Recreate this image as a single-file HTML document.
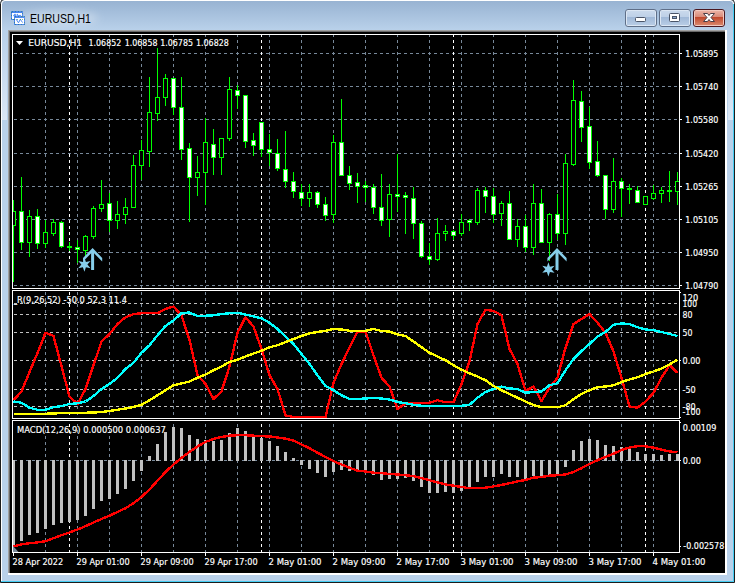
<!DOCTYPE html>
<html><head><meta charset="utf-8"><title>EURUSD,H1</title><style>html,body{margin:0;padding:0;background:#fff;overflow:hidden}svg{display:block}</style></head><body>
<svg width="737" height="583" viewBox="0 0 737 583" font-family='"Liberation Sans", "DejaVu Sans", sans-serif' shape-rendering="crispEdges">
<defs>
<linearGradient id="gt" x1="0" y1="0" x2="0" y2="1"><stop offset="0" stop-color="#98b3d2"/><stop offset="1" stop-color="#b9d1ea"/></linearGradient>
<linearGradient id="bt" x1="0" y1="0" x2="0" y2="1"><stop offset="0" stop-color="#c9d9ec"/><stop offset="1" stop-color="#bdd0e7"/></linearGradient>
<linearGradient id="bb" x1="0" y1="0" x2="0" y2="1"><stop offset="0" stop-color="#9fb8d7"/><stop offset="1" stop-color="#b7cce5"/></linearGradient>
<linearGradient id="ct" x1="0" y1="0" x2="0" y2="1"><stop offset="0" stop-color="#eab0a2"/><stop offset="1" stop-color="#d98a78"/></linearGradient>
<linearGradient id="cb" x1="0" y1="0" x2="0" y2="1"><stop offset="0" stop-color="#c0452a"/><stop offset="1" stop-color="#d88468"/></linearGradient>
<linearGradient id="refl" x1="0" y1="0" x2="0" y2="1"><stop offset="0" stop-color="#dbe7f5" stop-opacity="0"/><stop offset="1" stop-color="#dbe7f5" stop-opacity="1"/></linearGradient>
<filter id="glow" x="-20%" y="-60%" width="140%" height="220%"><feGaussianBlur stdDeviation="4"/></filter>
<clipPath id="cm"><rect x="13" y="35" width="666" height="253"/></clipPath>
<clipPath id="ci"><rect x="13" y="291" width="666" height="127"/></clipPath>
<clipPath id="cd"><rect x="13" y="421" width="666" height="131"/></clipPath>
</defs>
<rect x="0" y="0" width="737" height="583" fill="#ffffff"/>
<path d="M0.5 582.5 V3.5 Q0.5 -0.5 4.5 -0.5 H730.5 Q734.5 -0.5 734.5 3.5 V582.5 Z" fill="#b9d1ea" stroke="#1c1c1c" stroke-width="1" shape-rendering="auto"/>
<rect x="2" y="1" width="731" height="29" fill="url(#gt)"/>
<rect x="2" y="30" width="6" height="551" fill="#b9d1ea"/>
<rect x="727" y="30" width="6" height="551" fill="#b9d1ea"/>
<rect x="2" y="575" width="731" height="6" fill="#b9d1ea"/>
<rect x="2" y="34" width="5" height="86" fill="url(#refl)"/>
<rect x="728" y="34" width="5" height="86" fill="url(#refl)"/>
<path d="M1.5 581 V4 Q1.5 0.5 5 0.5 H730 Q733.5 0.5 733.5 4" fill="none" stroke="#ffffff" stroke-width="1" shape-rendering="auto"/>
<path d="M733.5 4 V581.5 H1" fill="none" stroke="#45cdf3" stroke-width="1" shape-rendering="auto"/>
<rect x="8" y="30" width="719" height="545" fill="#ffffff"/>
<rect x="8" y="30" width="717" height="543" fill="#a0a0a0"/>
<rect x="9" y="31" width="716" height="542" fill="#696969"/>
<rect x="10" y="32" width="715" height="541" fill="#000000"/>
<g shape-rendering="crispEdges">
<rect x="11" y="11" width="12" height="9" fill="#4785f2"/>
<rect x="12" y="13" width="10" height="6" fill="#ffffff"/>
<path d="M13.5 16 l1.5 -1.5 l1.5 2 M17 14 l1.5 2.5 l1.5 -1 l2 2" fill="none" stroke="#4785f2" stroke-width="1.2" shape-rendering="auto"/>
<rect x="14" y="16" width="11" height="9" fill="#4785f2"/>
<rect x="15" y="18" width="9" height="6" fill="#ffffff"/>
<path d="M16 19 L18.5 22.8 L20.3 19.3 L22.6 22.6" fill="none" stroke="#4785f2" stroke-width="1" shape-rendering="auto"/>
<path d="M11.5 11.5 h11 v8 h-8 M14.5 16.5 h10 v8 h-10 z M11.5 11.5 v8 h3" fill="none" stroke="#2f7a5c" stroke-dasharray="1 2" stroke-width="1" opacity="0.6"/>
</g>
<ellipse cx="60" cy="18" rx="38" ry="7" fill="#ffffff" opacity="0.35" filter="url(#glow)" shape-rendering="auto"/>
<text x="30" y="23" font-size="12" fill="#000000" textLength="61" lengthAdjust="spacingAndGlyphs" shape-rendering="auto">EURUSD,H1</text>
<rect x="625.5" y="9.5" width="31" height="17" rx="2.5" ry="2.5" fill="#dce7f4" stroke="#5f6f88" shape-rendering="auto"/>
<rect x="627" y="11" width="28" height="6" fill="url(#bt)"/>
<rect x="627" y="17" width="28" height="8" fill="url(#bb)"/>
<rect x="659.5" y="9.5" width="31" height="17" rx="2.5" ry="2.5" fill="#dce7f4" stroke="#5f6f88" shape-rendering="auto"/>
<rect x="661" y="11" width="28" height="6" fill="url(#bt)"/>
<rect x="661" y="17" width="28" height="8" fill="url(#bb)"/>
<rect x="693.5" y="9.5" width="31" height="17" rx="2.5" ry="2.5" fill="#f3c9bf" stroke="#4a1820" shape-rendering="auto"/>
<rect x="695" y="11" width="28" height="6" fill="url(#ct)"/>
<rect x="695" y="17" width="28" height="8" fill="url(#cb)"/>
<rect x="635.5" y="17.5" width="10" height="4" rx="1" fill="#ffffff" stroke="#4a5568" shape-rendering="auto"/>
<rect x="669.5" y="13.5" width="10" height="8" rx="1" fill="#ffffff" stroke="#4a5568" shape-rendering="auto"/>
<rect x="672.5" y="16.5" width="4" height="2" fill="#8aa6cc" stroke="#4a5568" shape-rendering="auto"/>
<path d="M703.5 13.5 h4 l1.5 2 l1.5 -2 h4 l-3.5 4 l3.5 4 h-4 l-1.5 -2 l-1.5 2 h-4 l3.5 -4 z" fill="#ffffff" stroke="#4b3f48" stroke-width="1" stroke-linejoin="round" shape-rendering="auto"/>
<path d="M45 35h1v2h-1zM45 40h1v3h-1zM45 46h1v3h-1zM45 52h1v3h-1zM45 58h1v3h-1zM45 64h1v3h-1zM45 70h1v3h-1zM45 76h1v3h-1zM45 82h1v3h-1zM45 88h1v3h-1zM45 94h1v3h-1zM45 100h1v3h-1zM45 106h1v3h-1zM45 112h1v3h-1zM45 118h1v3h-1zM45 124h1v3h-1zM45 130h1v3h-1zM45 136h1v3h-1zM45 142h1v3h-1zM45 148h1v3h-1zM45 154h1v3h-1zM45 160h1v3h-1zM45 166h1v3h-1zM45 172h1v3h-1zM45 178h1v3h-1zM45 184h1v3h-1zM45 190h1v3h-1zM45 196h1v3h-1zM45 202h1v3h-1zM45 208h1v3h-1zM45 214h1v3h-1zM45 220h1v3h-1zM45 226h1v3h-1zM45 232h1v3h-1zM45 238h1v3h-1zM45 244h1v3h-1zM45 250h1v3h-1zM45 256h1v3h-1zM45 262h1v3h-1zM45 268h1v3h-1zM45 274h1v3h-1zM45 280h1v3h-1zM45 286h1v2h-1z" fill="#778899"/>
<path d="M77 35h1v2h-1zM77 40h1v3h-1zM77 46h1v3h-1zM77 52h1v3h-1zM77 58h1v3h-1zM77 64h1v3h-1zM77 70h1v3h-1zM77 76h1v3h-1zM77 82h1v3h-1zM77 88h1v3h-1zM77 94h1v3h-1zM77 100h1v3h-1zM77 106h1v3h-1zM77 112h1v3h-1zM77 118h1v3h-1zM77 124h1v3h-1zM77 130h1v3h-1zM77 136h1v3h-1zM77 142h1v3h-1zM77 148h1v3h-1zM77 154h1v3h-1zM77 160h1v3h-1zM77 166h1v3h-1zM77 172h1v3h-1zM77 178h1v3h-1zM77 184h1v3h-1zM77 190h1v3h-1zM77 196h1v3h-1zM77 202h1v3h-1zM77 208h1v3h-1zM77 214h1v3h-1zM77 220h1v3h-1zM77 226h1v3h-1zM77 232h1v3h-1zM77 238h1v3h-1zM77 244h1v3h-1zM77 250h1v3h-1zM77 256h1v3h-1zM77 262h1v3h-1zM77 268h1v3h-1zM77 274h1v3h-1zM77 280h1v3h-1zM77 286h1v2h-1z" fill="#778899"/>
<path d="M109 35h1v2h-1zM109 40h1v3h-1zM109 46h1v3h-1zM109 52h1v3h-1zM109 58h1v3h-1zM109 64h1v3h-1zM109 70h1v3h-1zM109 76h1v3h-1zM109 82h1v3h-1zM109 88h1v3h-1zM109 94h1v3h-1zM109 100h1v3h-1zM109 106h1v3h-1zM109 112h1v3h-1zM109 118h1v3h-1zM109 124h1v3h-1zM109 130h1v3h-1zM109 136h1v3h-1zM109 142h1v3h-1zM109 148h1v3h-1zM109 154h1v3h-1zM109 160h1v3h-1zM109 166h1v3h-1zM109 172h1v3h-1zM109 178h1v3h-1zM109 184h1v3h-1zM109 190h1v3h-1zM109 196h1v3h-1zM109 202h1v3h-1zM109 208h1v3h-1zM109 214h1v3h-1zM109 220h1v3h-1zM109 226h1v3h-1zM109 232h1v3h-1zM109 238h1v3h-1zM109 244h1v3h-1zM109 250h1v3h-1zM109 256h1v3h-1zM109 262h1v3h-1zM109 268h1v3h-1zM109 274h1v3h-1zM109 280h1v3h-1zM109 286h1v2h-1z" fill="#778899"/>
<path d="M141 35h1v2h-1zM141 40h1v3h-1zM141 46h1v3h-1zM141 52h1v3h-1zM141 58h1v3h-1zM141 64h1v3h-1zM141 70h1v3h-1zM141 76h1v3h-1zM141 82h1v3h-1zM141 88h1v3h-1zM141 94h1v3h-1zM141 100h1v3h-1zM141 106h1v3h-1zM141 112h1v3h-1zM141 118h1v3h-1zM141 124h1v3h-1zM141 130h1v3h-1zM141 136h1v3h-1zM141 142h1v3h-1zM141 148h1v3h-1zM141 154h1v3h-1zM141 160h1v3h-1zM141 166h1v3h-1zM141 172h1v3h-1zM141 178h1v3h-1zM141 184h1v3h-1zM141 190h1v3h-1zM141 196h1v3h-1zM141 202h1v3h-1zM141 208h1v3h-1zM141 214h1v3h-1zM141 220h1v3h-1zM141 226h1v3h-1zM141 232h1v3h-1zM141 238h1v3h-1zM141 244h1v3h-1zM141 250h1v3h-1zM141 256h1v3h-1zM141 262h1v3h-1zM141 268h1v3h-1zM141 274h1v3h-1zM141 280h1v3h-1zM141 286h1v2h-1z" fill="#778899"/>
<path d="M173 35h1v2h-1zM173 40h1v3h-1zM173 46h1v3h-1zM173 52h1v3h-1zM173 58h1v3h-1zM173 64h1v3h-1zM173 70h1v3h-1zM173 76h1v3h-1zM173 82h1v3h-1zM173 88h1v3h-1zM173 94h1v3h-1zM173 100h1v3h-1zM173 106h1v3h-1zM173 112h1v3h-1zM173 118h1v3h-1zM173 124h1v3h-1zM173 130h1v3h-1zM173 136h1v3h-1zM173 142h1v3h-1zM173 148h1v3h-1zM173 154h1v3h-1zM173 160h1v3h-1zM173 166h1v3h-1zM173 172h1v3h-1zM173 178h1v3h-1zM173 184h1v3h-1zM173 190h1v3h-1zM173 196h1v3h-1zM173 202h1v3h-1zM173 208h1v3h-1zM173 214h1v3h-1zM173 220h1v3h-1zM173 226h1v3h-1zM173 232h1v3h-1zM173 238h1v3h-1zM173 244h1v3h-1zM173 250h1v3h-1zM173 256h1v3h-1zM173 262h1v3h-1zM173 268h1v3h-1zM173 274h1v3h-1zM173 280h1v3h-1zM173 286h1v2h-1z" fill="#778899"/>
<path d="M205 35h1v2h-1zM205 40h1v3h-1zM205 46h1v3h-1zM205 52h1v3h-1zM205 58h1v3h-1zM205 64h1v3h-1zM205 70h1v3h-1zM205 76h1v3h-1zM205 82h1v3h-1zM205 88h1v3h-1zM205 94h1v3h-1zM205 100h1v3h-1zM205 106h1v3h-1zM205 112h1v3h-1zM205 118h1v3h-1zM205 124h1v3h-1zM205 130h1v3h-1zM205 136h1v3h-1zM205 142h1v3h-1zM205 148h1v3h-1zM205 154h1v3h-1zM205 160h1v3h-1zM205 166h1v3h-1zM205 172h1v3h-1zM205 178h1v3h-1zM205 184h1v3h-1zM205 190h1v3h-1zM205 196h1v3h-1zM205 202h1v3h-1zM205 208h1v3h-1zM205 214h1v3h-1zM205 220h1v3h-1zM205 226h1v3h-1zM205 232h1v3h-1zM205 238h1v3h-1zM205 244h1v3h-1zM205 250h1v3h-1zM205 256h1v3h-1zM205 262h1v3h-1zM205 268h1v3h-1zM205 274h1v3h-1zM205 280h1v3h-1zM205 286h1v2h-1z" fill="#778899"/>
<path d="M237 35h1v2h-1zM237 40h1v3h-1zM237 46h1v3h-1zM237 52h1v3h-1zM237 58h1v3h-1zM237 64h1v3h-1zM237 70h1v3h-1zM237 76h1v3h-1zM237 82h1v3h-1zM237 88h1v3h-1zM237 94h1v3h-1zM237 100h1v3h-1zM237 106h1v3h-1zM237 112h1v3h-1zM237 118h1v3h-1zM237 124h1v3h-1zM237 130h1v3h-1zM237 136h1v3h-1zM237 142h1v3h-1zM237 148h1v3h-1zM237 154h1v3h-1zM237 160h1v3h-1zM237 166h1v3h-1zM237 172h1v3h-1zM237 178h1v3h-1zM237 184h1v3h-1zM237 190h1v3h-1zM237 196h1v3h-1zM237 202h1v3h-1zM237 208h1v3h-1zM237 214h1v3h-1zM237 220h1v3h-1zM237 226h1v3h-1zM237 232h1v3h-1zM237 238h1v3h-1zM237 244h1v3h-1zM237 250h1v3h-1zM237 256h1v3h-1zM237 262h1v3h-1zM237 268h1v3h-1zM237 274h1v3h-1zM237 280h1v3h-1zM237 286h1v2h-1z" fill="#778899"/>
<path d="M269 35h1v2h-1zM269 40h1v3h-1zM269 46h1v3h-1zM269 52h1v3h-1zM269 58h1v3h-1zM269 64h1v3h-1zM269 70h1v3h-1zM269 76h1v3h-1zM269 82h1v3h-1zM269 88h1v3h-1zM269 94h1v3h-1zM269 100h1v3h-1zM269 106h1v3h-1zM269 112h1v3h-1zM269 118h1v3h-1zM269 124h1v3h-1zM269 130h1v3h-1zM269 136h1v3h-1zM269 142h1v3h-1zM269 148h1v3h-1zM269 154h1v3h-1zM269 160h1v3h-1zM269 166h1v3h-1zM269 172h1v3h-1zM269 178h1v3h-1zM269 184h1v3h-1zM269 190h1v3h-1zM269 196h1v3h-1zM269 202h1v3h-1zM269 208h1v3h-1zM269 214h1v3h-1zM269 220h1v3h-1zM269 226h1v3h-1zM269 232h1v3h-1zM269 238h1v3h-1zM269 244h1v3h-1zM269 250h1v3h-1zM269 256h1v3h-1zM269 262h1v3h-1zM269 268h1v3h-1zM269 274h1v3h-1zM269 280h1v3h-1zM269 286h1v2h-1z" fill="#778899"/>
<path d="M301 35h1v2h-1zM301 40h1v3h-1zM301 46h1v3h-1zM301 52h1v3h-1zM301 58h1v3h-1zM301 64h1v3h-1zM301 70h1v3h-1zM301 76h1v3h-1zM301 82h1v3h-1zM301 88h1v3h-1zM301 94h1v3h-1zM301 100h1v3h-1zM301 106h1v3h-1zM301 112h1v3h-1zM301 118h1v3h-1zM301 124h1v3h-1zM301 130h1v3h-1zM301 136h1v3h-1zM301 142h1v3h-1zM301 148h1v3h-1zM301 154h1v3h-1zM301 160h1v3h-1zM301 166h1v3h-1zM301 172h1v3h-1zM301 178h1v3h-1zM301 184h1v3h-1zM301 190h1v3h-1zM301 196h1v3h-1zM301 202h1v3h-1zM301 208h1v3h-1zM301 214h1v3h-1zM301 220h1v3h-1zM301 226h1v3h-1zM301 232h1v3h-1zM301 238h1v3h-1zM301 244h1v3h-1zM301 250h1v3h-1zM301 256h1v3h-1zM301 262h1v3h-1zM301 268h1v3h-1zM301 274h1v3h-1zM301 280h1v3h-1zM301 286h1v2h-1z" fill="#778899"/>
<path d="M333 35h1v2h-1zM333 40h1v3h-1zM333 46h1v3h-1zM333 52h1v3h-1zM333 58h1v3h-1zM333 64h1v3h-1zM333 70h1v3h-1zM333 76h1v3h-1zM333 82h1v3h-1zM333 88h1v3h-1zM333 94h1v3h-1zM333 100h1v3h-1zM333 106h1v3h-1zM333 112h1v3h-1zM333 118h1v3h-1zM333 124h1v3h-1zM333 130h1v3h-1zM333 136h1v3h-1zM333 142h1v3h-1zM333 148h1v3h-1zM333 154h1v3h-1zM333 160h1v3h-1zM333 166h1v3h-1zM333 172h1v3h-1zM333 178h1v3h-1zM333 184h1v3h-1zM333 190h1v3h-1zM333 196h1v3h-1zM333 202h1v3h-1zM333 208h1v3h-1zM333 214h1v3h-1zM333 220h1v3h-1zM333 226h1v3h-1zM333 232h1v3h-1zM333 238h1v3h-1zM333 244h1v3h-1zM333 250h1v3h-1zM333 256h1v3h-1zM333 262h1v3h-1zM333 268h1v3h-1zM333 274h1v3h-1zM333 280h1v3h-1zM333 286h1v2h-1z" fill="#778899"/>
<path d="M365 35h1v2h-1zM365 40h1v3h-1zM365 46h1v3h-1zM365 52h1v3h-1zM365 58h1v3h-1zM365 64h1v3h-1zM365 70h1v3h-1zM365 76h1v3h-1zM365 82h1v3h-1zM365 88h1v3h-1zM365 94h1v3h-1zM365 100h1v3h-1zM365 106h1v3h-1zM365 112h1v3h-1zM365 118h1v3h-1zM365 124h1v3h-1zM365 130h1v3h-1zM365 136h1v3h-1zM365 142h1v3h-1zM365 148h1v3h-1zM365 154h1v3h-1zM365 160h1v3h-1zM365 166h1v3h-1zM365 172h1v3h-1zM365 178h1v3h-1zM365 184h1v3h-1zM365 190h1v3h-1zM365 196h1v3h-1zM365 202h1v3h-1zM365 208h1v3h-1zM365 214h1v3h-1zM365 220h1v3h-1zM365 226h1v3h-1zM365 232h1v3h-1zM365 238h1v3h-1zM365 244h1v3h-1zM365 250h1v3h-1zM365 256h1v3h-1zM365 262h1v3h-1zM365 268h1v3h-1zM365 274h1v3h-1zM365 280h1v3h-1zM365 286h1v2h-1z" fill="#778899"/>
<path d="M397 35h1v2h-1zM397 40h1v3h-1zM397 46h1v3h-1zM397 52h1v3h-1zM397 58h1v3h-1zM397 64h1v3h-1zM397 70h1v3h-1zM397 76h1v3h-1zM397 82h1v3h-1zM397 88h1v3h-1zM397 94h1v3h-1zM397 100h1v3h-1zM397 106h1v3h-1zM397 112h1v3h-1zM397 118h1v3h-1zM397 124h1v3h-1zM397 130h1v3h-1zM397 136h1v3h-1zM397 142h1v3h-1zM397 148h1v3h-1zM397 154h1v3h-1zM397 160h1v3h-1zM397 166h1v3h-1zM397 172h1v3h-1zM397 178h1v3h-1zM397 184h1v3h-1zM397 190h1v3h-1zM397 196h1v3h-1zM397 202h1v3h-1zM397 208h1v3h-1zM397 214h1v3h-1zM397 220h1v3h-1zM397 226h1v3h-1zM397 232h1v3h-1zM397 238h1v3h-1zM397 244h1v3h-1zM397 250h1v3h-1zM397 256h1v3h-1zM397 262h1v3h-1zM397 268h1v3h-1zM397 274h1v3h-1zM397 280h1v3h-1zM397 286h1v2h-1z" fill="#778899"/>
<path d="M429 35h1v2h-1zM429 40h1v3h-1zM429 46h1v3h-1zM429 52h1v3h-1zM429 58h1v3h-1zM429 64h1v3h-1zM429 70h1v3h-1zM429 76h1v3h-1zM429 82h1v3h-1zM429 88h1v3h-1zM429 94h1v3h-1zM429 100h1v3h-1zM429 106h1v3h-1zM429 112h1v3h-1zM429 118h1v3h-1zM429 124h1v3h-1zM429 130h1v3h-1zM429 136h1v3h-1zM429 142h1v3h-1zM429 148h1v3h-1zM429 154h1v3h-1zM429 160h1v3h-1zM429 166h1v3h-1zM429 172h1v3h-1zM429 178h1v3h-1zM429 184h1v3h-1zM429 190h1v3h-1zM429 196h1v3h-1zM429 202h1v3h-1zM429 208h1v3h-1zM429 214h1v3h-1zM429 220h1v3h-1zM429 226h1v3h-1zM429 232h1v3h-1zM429 238h1v3h-1zM429 244h1v3h-1zM429 250h1v3h-1zM429 256h1v3h-1zM429 262h1v3h-1zM429 268h1v3h-1zM429 274h1v3h-1zM429 280h1v3h-1zM429 286h1v2h-1z" fill="#778899"/>
<path d="M461 35h1v2h-1zM461 40h1v3h-1zM461 46h1v3h-1zM461 52h1v3h-1zM461 58h1v3h-1zM461 64h1v3h-1zM461 70h1v3h-1zM461 76h1v3h-1zM461 82h1v3h-1zM461 88h1v3h-1zM461 94h1v3h-1zM461 100h1v3h-1zM461 106h1v3h-1zM461 112h1v3h-1zM461 118h1v3h-1zM461 124h1v3h-1zM461 130h1v3h-1zM461 136h1v3h-1zM461 142h1v3h-1zM461 148h1v3h-1zM461 154h1v3h-1zM461 160h1v3h-1zM461 166h1v3h-1zM461 172h1v3h-1zM461 178h1v3h-1zM461 184h1v3h-1zM461 190h1v3h-1zM461 196h1v3h-1zM461 202h1v3h-1zM461 208h1v3h-1zM461 214h1v3h-1zM461 220h1v3h-1zM461 226h1v3h-1zM461 232h1v3h-1zM461 238h1v3h-1zM461 244h1v3h-1zM461 250h1v3h-1zM461 256h1v3h-1zM461 262h1v3h-1zM461 268h1v3h-1zM461 274h1v3h-1zM461 280h1v3h-1zM461 286h1v2h-1z" fill="#778899"/>
<path d="M493 35h1v2h-1zM493 40h1v3h-1zM493 46h1v3h-1zM493 52h1v3h-1zM493 58h1v3h-1zM493 64h1v3h-1zM493 70h1v3h-1zM493 76h1v3h-1zM493 82h1v3h-1zM493 88h1v3h-1zM493 94h1v3h-1zM493 100h1v3h-1zM493 106h1v3h-1zM493 112h1v3h-1zM493 118h1v3h-1zM493 124h1v3h-1zM493 130h1v3h-1zM493 136h1v3h-1zM493 142h1v3h-1zM493 148h1v3h-1zM493 154h1v3h-1zM493 160h1v3h-1zM493 166h1v3h-1zM493 172h1v3h-1zM493 178h1v3h-1zM493 184h1v3h-1zM493 190h1v3h-1zM493 196h1v3h-1zM493 202h1v3h-1zM493 208h1v3h-1zM493 214h1v3h-1zM493 220h1v3h-1zM493 226h1v3h-1zM493 232h1v3h-1zM493 238h1v3h-1zM493 244h1v3h-1zM493 250h1v3h-1zM493 256h1v3h-1zM493 262h1v3h-1zM493 268h1v3h-1zM493 274h1v3h-1zM493 280h1v3h-1zM493 286h1v2h-1z" fill="#778899"/>
<path d="M525 35h1v2h-1zM525 40h1v3h-1zM525 46h1v3h-1zM525 52h1v3h-1zM525 58h1v3h-1zM525 64h1v3h-1zM525 70h1v3h-1zM525 76h1v3h-1zM525 82h1v3h-1zM525 88h1v3h-1zM525 94h1v3h-1zM525 100h1v3h-1zM525 106h1v3h-1zM525 112h1v3h-1zM525 118h1v3h-1zM525 124h1v3h-1zM525 130h1v3h-1zM525 136h1v3h-1zM525 142h1v3h-1zM525 148h1v3h-1zM525 154h1v3h-1zM525 160h1v3h-1zM525 166h1v3h-1zM525 172h1v3h-1zM525 178h1v3h-1zM525 184h1v3h-1zM525 190h1v3h-1zM525 196h1v3h-1zM525 202h1v3h-1zM525 208h1v3h-1zM525 214h1v3h-1zM525 220h1v3h-1zM525 226h1v3h-1zM525 232h1v3h-1zM525 238h1v3h-1zM525 244h1v3h-1zM525 250h1v3h-1zM525 256h1v3h-1zM525 262h1v3h-1zM525 268h1v3h-1zM525 274h1v3h-1zM525 280h1v3h-1zM525 286h1v2h-1z" fill="#778899"/>
<path d="M557 35h1v2h-1zM557 40h1v3h-1zM557 46h1v3h-1zM557 52h1v3h-1zM557 58h1v3h-1zM557 64h1v3h-1zM557 70h1v3h-1zM557 76h1v3h-1zM557 82h1v3h-1zM557 88h1v3h-1zM557 94h1v3h-1zM557 100h1v3h-1zM557 106h1v3h-1zM557 112h1v3h-1zM557 118h1v3h-1zM557 124h1v3h-1zM557 130h1v3h-1zM557 136h1v3h-1zM557 142h1v3h-1zM557 148h1v3h-1zM557 154h1v3h-1zM557 160h1v3h-1zM557 166h1v3h-1zM557 172h1v3h-1zM557 178h1v3h-1zM557 184h1v3h-1zM557 190h1v3h-1zM557 196h1v3h-1zM557 202h1v3h-1zM557 208h1v3h-1zM557 214h1v3h-1zM557 220h1v3h-1zM557 226h1v3h-1zM557 232h1v3h-1zM557 238h1v3h-1zM557 244h1v3h-1zM557 250h1v3h-1zM557 256h1v3h-1zM557 262h1v3h-1zM557 268h1v3h-1zM557 274h1v3h-1zM557 280h1v3h-1zM557 286h1v2h-1z" fill="#778899"/>
<path d="M589 35h1v2h-1zM589 40h1v3h-1zM589 46h1v3h-1zM589 52h1v3h-1zM589 58h1v3h-1zM589 64h1v3h-1zM589 70h1v3h-1zM589 76h1v3h-1zM589 82h1v3h-1zM589 88h1v3h-1zM589 94h1v3h-1zM589 100h1v3h-1zM589 106h1v3h-1zM589 112h1v3h-1zM589 118h1v3h-1zM589 124h1v3h-1zM589 130h1v3h-1zM589 136h1v3h-1zM589 142h1v3h-1zM589 148h1v3h-1zM589 154h1v3h-1zM589 160h1v3h-1zM589 166h1v3h-1zM589 172h1v3h-1zM589 178h1v3h-1zM589 184h1v3h-1zM589 190h1v3h-1zM589 196h1v3h-1zM589 202h1v3h-1zM589 208h1v3h-1zM589 214h1v3h-1zM589 220h1v3h-1zM589 226h1v3h-1zM589 232h1v3h-1zM589 238h1v3h-1zM589 244h1v3h-1zM589 250h1v3h-1zM589 256h1v3h-1zM589 262h1v3h-1zM589 268h1v3h-1zM589 274h1v3h-1zM589 280h1v3h-1zM589 286h1v2h-1z" fill="#778899"/>
<path d="M621 35h1v2h-1zM621 40h1v3h-1zM621 46h1v3h-1zM621 52h1v3h-1zM621 58h1v3h-1zM621 64h1v3h-1zM621 70h1v3h-1zM621 76h1v3h-1zM621 82h1v3h-1zM621 88h1v3h-1zM621 94h1v3h-1zM621 100h1v3h-1zM621 106h1v3h-1zM621 112h1v3h-1zM621 118h1v3h-1zM621 124h1v3h-1zM621 130h1v3h-1zM621 136h1v3h-1zM621 142h1v3h-1zM621 148h1v3h-1zM621 154h1v3h-1zM621 160h1v3h-1zM621 166h1v3h-1zM621 172h1v3h-1zM621 178h1v3h-1zM621 184h1v3h-1zM621 190h1v3h-1zM621 196h1v3h-1zM621 202h1v3h-1zM621 208h1v3h-1zM621 214h1v3h-1zM621 220h1v3h-1zM621 226h1v3h-1zM621 232h1v3h-1zM621 238h1v3h-1zM621 244h1v3h-1zM621 250h1v3h-1zM621 256h1v3h-1zM621 262h1v3h-1zM621 268h1v3h-1zM621 274h1v3h-1zM621 280h1v3h-1zM621 286h1v2h-1z" fill="#778899"/>
<path d="M653 35h1v2h-1zM653 40h1v3h-1zM653 46h1v3h-1zM653 52h1v3h-1zM653 58h1v3h-1zM653 64h1v3h-1zM653 70h1v3h-1zM653 76h1v3h-1zM653 82h1v3h-1zM653 88h1v3h-1zM653 94h1v3h-1zM653 100h1v3h-1zM653 106h1v3h-1zM653 112h1v3h-1zM653 118h1v3h-1zM653 124h1v3h-1zM653 130h1v3h-1zM653 136h1v3h-1zM653 142h1v3h-1zM653 148h1v3h-1zM653 154h1v3h-1zM653 160h1v3h-1zM653 166h1v3h-1zM653 172h1v3h-1zM653 178h1v3h-1zM653 184h1v3h-1zM653 190h1v3h-1zM653 196h1v3h-1zM653 202h1v3h-1zM653 208h1v3h-1zM653 214h1v3h-1zM653 220h1v3h-1zM653 226h1v3h-1zM653 232h1v3h-1zM653 238h1v3h-1zM653 244h1v3h-1zM653 250h1v3h-1zM653 256h1v3h-1zM653 262h1v3h-1zM653 268h1v3h-1zM653 274h1v3h-1zM653 280h1v3h-1zM653 286h1v2h-1z" fill="#778899"/>
<path d="M45 292h1v3h-1zM45 298h1v3h-1zM45 304h1v3h-1zM45 310h1v3h-1zM45 316h1v3h-1zM45 322h1v3h-1zM45 328h1v3h-1zM45 334h1v3h-1zM45 340h1v3h-1zM45 346h1v3h-1zM45 352h1v3h-1zM45 358h1v3h-1zM45 364h1v3h-1zM45 370h1v3h-1zM45 376h1v3h-1zM45 382h1v3h-1zM45 388h1v3h-1zM45 394h1v3h-1zM45 400h1v3h-1zM45 406h1v3h-1zM45 412h1v3h-1z" fill="#778899"/>
<path d="M77 292h1v3h-1zM77 298h1v3h-1zM77 304h1v3h-1zM77 310h1v3h-1zM77 316h1v3h-1zM77 322h1v3h-1zM77 328h1v3h-1zM77 334h1v3h-1zM77 340h1v3h-1zM77 346h1v3h-1zM77 352h1v3h-1zM77 358h1v3h-1zM77 364h1v3h-1zM77 370h1v3h-1zM77 376h1v3h-1zM77 382h1v3h-1zM77 388h1v3h-1zM77 394h1v3h-1zM77 400h1v3h-1zM77 406h1v3h-1zM77 412h1v3h-1z" fill="#778899"/>
<path d="M109 292h1v3h-1zM109 298h1v3h-1zM109 304h1v3h-1zM109 310h1v3h-1zM109 316h1v3h-1zM109 322h1v3h-1zM109 328h1v3h-1zM109 334h1v3h-1zM109 340h1v3h-1zM109 346h1v3h-1zM109 352h1v3h-1zM109 358h1v3h-1zM109 364h1v3h-1zM109 370h1v3h-1zM109 376h1v3h-1zM109 382h1v3h-1zM109 388h1v3h-1zM109 394h1v3h-1zM109 400h1v3h-1zM109 406h1v3h-1zM109 412h1v3h-1z" fill="#778899"/>
<path d="M141 292h1v3h-1zM141 298h1v3h-1zM141 304h1v3h-1zM141 310h1v3h-1zM141 316h1v3h-1zM141 322h1v3h-1zM141 328h1v3h-1zM141 334h1v3h-1zM141 340h1v3h-1zM141 346h1v3h-1zM141 352h1v3h-1zM141 358h1v3h-1zM141 364h1v3h-1zM141 370h1v3h-1zM141 376h1v3h-1zM141 382h1v3h-1zM141 388h1v3h-1zM141 394h1v3h-1zM141 400h1v3h-1zM141 406h1v3h-1zM141 412h1v3h-1z" fill="#778899"/>
<path d="M173 292h1v3h-1zM173 298h1v3h-1zM173 304h1v3h-1zM173 310h1v3h-1zM173 316h1v3h-1zM173 322h1v3h-1zM173 328h1v3h-1zM173 334h1v3h-1zM173 340h1v3h-1zM173 346h1v3h-1zM173 352h1v3h-1zM173 358h1v3h-1zM173 364h1v3h-1zM173 370h1v3h-1zM173 376h1v3h-1zM173 382h1v3h-1zM173 388h1v3h-1zM173 394h1v3h-1zM173 400h1v3h-1zM173 406h1v3h-1zM173 412h1v3h-1z" fill="#778899"/>
<path d="M205 292h1v3h-1zM205 298h1v3h-1zM205 304h1v3h-1zM205 310h1v3h-1zM205 316h1v3h-1zM205 322h1v3h-1zM205 328h1v3h-1zM205 334h1v3h-1zM205 340h1v3h-1zM205 346h1v3h-1zM205 352h1v3h-1zM205 358h1v3h-1zM205 364h1v3h-1zM205 370h1v3h-1zM205 376h1v3h-1zM205 382h1v3h-1zM205 388h1v3h-1zM205 394h1v3h-1zM205 400h1v3h-1zM205 406h1v3h-1zM205 412h1v3h-1z" fill="#778899"/>
<path d="M237 292h1v3h-1zM237 298h1v3h-1zM237 304h1v3h-1zM237 310h1v3h-1zM237 316h1v3h-1zM237 322h1v3h-1zM237 328h1v3h-1zM237 334h1v3h-1zM237 340h1v3h-1zM237 346h1v3h-1zM237 352h1v3h-1zM237 358h1v3h-1zM237 364h1v3h-1zM237 370h1v3h-1zM237 376h1v3h-1zM237 382h1v3h-1zM237 388h1v3h-1zM237 394h1v3h-1zM237 400h1v3h-1zM237 406h1v3h-1zM237 412h1v3h-1z" fill="#778899"/>
<path d="M269 292h1v3h-1zM269 298h1v3h-1zM269 304h1v3h-1zM269 310h1v3h-1zM269 316h1v3h-1zM269 322h1v3h-1zM269 328h1v3h-1zM269 334h1v3h-1zM269 340h1v3h-1zM269 346h1v3h-1zM269 352h1v3h-1zM269 358h1v3h-1zM269 364h1v3h-1zM269 370h1v3h-1zM269 376h1v3h-1zM269 382h1v3h-1zM269 388h1v3h-1zM269 394h1v3h-1zM269 400h1v3h-1zM269 406h1v3h-1zM269 412h1v3h-1z" fill="#778899"/>
<path d="M301 292h1v3h-1zM301 298h1v3h-1zM301 304h1v3h-1zM301 310h1v3h-1zM301 316h1v3h-1zM301 322h1v3h-1zM301 328h1v3h-1zM301 334h1v3h-1zM301 340h1v3h-1zM301 346h1v3h-1zM301 352h1v3h-1zM301 358h1v3h-1zM301 364h1v3h-1zM301 370h1v3h-1zM301 376h1v3h-1zM301 382h1v3h-1zM301 388h1v3h-1zM301 394h1v3h-1zM301 400h1v3h-1zM301 406h1v3h-1zM301 412h1v3h-1z" fill="#778899"/>
<path d="M333 292h1v3h-1zM333 298h1v3h-1zM333 304h1v3h-1zM333 310h1v3h-1zM333 316h1v3h-1zM333 322h1v3h-1zM333 328h1v3h-1zM333 334h1v3h-1zM333 340h1v3h-1zM333 346h1v3h-1zM333 352h1v3h-1zM333 358h1v3h-1zM333 364h1v3h-1zM333 370h1v3h-1zM333 376h1v3h-1zM333 382h1v3h-1zM333 388h1v3h-1zM333 394h1v3h-1zM333 400h1v3h-1zM333 406h1v3h-1zM333 412h1v3h-1z" fill="#778899"/>
<path d="M365 292h1v3h-1zM365 298h1v3h-1zM365 304h1v3h-1zM365 310h1v3h-1zM365 316h1v3h-1zM365 322h1v3h-1zM365 328h1v3h-1zM365 334h1v3h-1zM365 340h1v3h-1zM365 346h1v3h-1zM365 352h1v3h-1zM365 358h1v3h-1zM365 364h1v3h-1zM365 370h1v3h-1zM365 376h1v3h-1zM365 382h1v3h-1zM365 388h1v3h-1zM365 394h1v3h-1zM365 400h1v3h-1zM365 406h1v3h-1zM365 412h1v3h-1z" fill="#778899"/>
<path d="M397 292h1v3h-1zM397 298h1v3h-1zM397 304h1v3h-1zM397 310h1v3h-1zM397 316h1v3h-1zM397 322h1v3h-1zM397 328h1v3h-1zM397 334h1v3h-1zM397 340h1v3h-1zM397 346h1v3h-1zM397 352h1v3h-1zM397 358h1v3h-1zM397 364h1v3h-1zM397 370h1v3h-1zM397 376h1v3h-1zM397 382h1v3h-1zM397 388h1v3h-1zM397 394h1v3h-1zM397 400h1v3h-1zM397 406h1v3h-1zM397 412h1v3h-1z" fill="#778899"/>
<path d="M429 292h1v3h-1zM429 298h1v3h-1zM429 304h1v3h-1zM429 310h1v3h-1zM429 316h1v3h-1zM429 322h1v3h-1zM429 328h1v3h-1zM429 334h1v3h-1zM429 340h1v3h-1zM429 346h1v3h-1zM429 352h1v3h-1zM429 358h1v3h-1zM429 364h1v3h-1zM429 370h1v3h-1zM429 376h1v3h-1zM429 382h1v3h-1zM429 388h1v3h-1zM429 394h1v3h-1zM429 400h1v3h-1zM429 406h1v3h-1zM429 412h1v3h-1z" fill="#778899"/>
<path d="M461 292h1v3h-1zM461 298h1v3h-1zM461 304h1v3h-1zM461 310h1v3h-1zM461 316h1v3h-1zM461 322h1v3h-1zM461 328h1v3h-1zM461 334h1v3h-1zM461 340h1v3h-1zM461 346h1v3h-1zM461 352h1v3h-1zM461 358h1v3h-1zM461 364h1v3h-1zM461 370h1v3h-1zM461 376h1v3h-1zM461 382h1v3h-1zM461 388h1v3h-1zM461 394h1v3h-1zM461 400h1v3h-1zM461 406h1v3h-1zM461 412h1v3h-1z" fill="#778899"/>
<path d="M493 292h1v3h-1zM493 298h1v3h-1zM493 304h1v3h-1zM493 310h1v3h-1zM493 316h1v3h-1zM493 322h1v3h-1zM493 328h1v3h-1zM493 334h1v3h-1zM493 340h1v3h-1zM493 346h1v3h-1zM493 352h1v3h-1zM493 358h1v3h-1zM493 364h1v3h-1zM493 370h1v3h-1zM493 376h1v3h-1zM493 382h1v3h-1zM493 388h1v3h-1zM493 394h1v3h-1zM493 400h1v3h-1zM493 406h1v3h-1zM493 412h1v3h-1z" fill="#778899"/>
<path d="M525 292h1v3h-1zM525 298h1v3h-1zM525 304h1v3h-1zM525 310h1v3h-1zM525 316h1v3h-1zM525 322h1v3h-1zM525 328h1v3h-1zM525 334h1v3h-1zM525 340h1v3h-1zM525 346h1v3h-1zM525 352h1v3h-1zM525 358h1v3h-1zM525 364h1v3h-1zM525 370h1v3h-1zM525 376h1v3h-1zM525 382h1v3h-1zM525 388h1v3h-1zM525 394h1v3h-1zM525 400h1v3h-1zM525 406h1v3h-1zM525 412h1v3h-1z" fill="#778899"/>
<path d="M557 292h1v3h-1zM557 298h1v3h-1zM557 304h1v3h-1zM557 310h1v3h-1zM557 316h1v3h-1zM557 322h1v3h-1zM557 328h1v3h-1zM557 334h1v3h-1zM557 340h1v3h-1zM557 346h1v3h-1zM557 352h1v3h-1zM557 358h1v3h-1zM557 364h1v3h-1zM557 370h1v3h-1zM557 376h1v3h-1zM557 382h1v3h-1zM557 388h1v3h-1zM557 394h1v3h-1zM557 400h1v3h-1zM557 406h1v3h-1zM557 412h1v3h-1z" fill="#778899"/>
<path d="M589 292h1v3h-1zM589 298h1v3h-1zM589 304h1v3h-1zM589 310h1v3h-1zM589 316h1v3h-1zM589 322h1v3h-1zM589 328h1v3h-1zM589 334h1v3h-1zM589 340h1v3h-1zM589 346h1v3h-1zM589 352h1v3h-1zM589 358h1v3h-1zM589 364h1v3h-1zM589 370h1v3h-1zM589 376h1v3h-1zM589 382h1v3h-1zM589 388h1v3h-1zM589 394h1v3h-1zM589 400h1v3h-1zM589 406h1v3h-1zM589 412h1v3h-1z" fill="#778899"/>
<path d="M621 292h1v3h-1zM621 298h1v3h-1zM621 304h1v3h-1zM621 310h1v3h-1zM621 316h1v3h-1zM621 322h1v3h-1zM621 328h1v3h-1zM621 334h1v3h-1zM621 340h1v3h-1zM621 346h1v3h-1zM621 352h1v3h-1zM621 358h1v3h-1zM621 364h1v3h-1zM621 370h1v3h-1zM621 376h1v3h-1zM621 382h1v3h-1zM621 388h1v3h-1zM621 394h1v3h-1zM621 400h1v3h-1zM621 406h1v3h-1zM621 412h1v3h-1z" fill="#778899"/>
<path d="M653 292h1v3h-1zM653 298h1v3h-1zM653 304h1v3h-1zM653 310h1v3h-1zM653 316h1v3h-1zM653 322h1v3h-1zM653 328h1v3h-1zM653 334h1v3h-1zM653 340h1v3h-1zM653 346h1v3h-1zM653 352h1v3h-1zM653 358h1v3h-1zM653 364h1v3h-1zM653 370h1v3h-1zM653 376h1v3h-1zM653 382h1v3h-1zM653 388h1v3h-1zM653 394h1v3h-1zM653 400h1v3h-1zM653 406h1v3h-1zM653 412h1v3h-1z" fill="#778899"/>
<path d="M45 424h1v3h-1zM45 430h1v3h-1zM45 436h1v3h-1zM45 442h1v3h-1zM45 448h1v3h-1zM45 454h1v3h-1zM45 460h1v3h-1zM45 466h1v3h-1zM45 472h1v3h-1zM45 478h1v3h-1zM45 484h1v3h-1zM45 490h1v3h-1zM45 496h1v3h-1zM45 502h1v3h-1zM45 508h1v3h-1zM45 514h1v3h-1zM45 520h1v3h-1zM45 526h1v3h-1zM45 532h1v3h-1zM45 538h1v3h-1zM45 544h1v3h-1zM45 550h1v2h-1z" fill="#778899"/>
<path d="M77 424h1v3h-1zM77 430h1v3h-1zM77 436h1v3h-1zM77 442h1v3h-1zM77 448h1v3h-1zM77 454h1v3h-1zM77 460h1v3h-1zM77 466h1v3h-1zM77 472h1v3h-1zM77 478h1v3h-1zM77 484h1v3h-1zM77 490h1v3h-1zM77 496h1v3h-1zM77 502h1v3h-1zM77 508h1v3h-1zM77 514h1v3h-1zM77 520h1v3h-1zM77 526h1v3h-1zM77 532h1v3h-1zM77 538h1v3h-1zM77 544h1v3h-1zM77 550h1v2h-1z" fill="#778899"/>
<path d="M109 424h1v3h-1zM109 430h1v3h-1zM109 436h1v3h-1zM109 442h1v3h-1zM109 448h1v3h-1zM109 454h1v3h-1zM109 460h1v3h-1zM109 466h1v3h-1zM109 472h1v3h-1zM109 478h1v3h-1zM109 484h1v3h-1zM109 490h1v3h-1zM109 496h1v3h-1zM109 502h1v3h-1zM109 508h1v3h-1zM109 514h1v3h-1zM109 520h1v3h-1zM109 526h1v3h-1zM109 532h1v3h-1zM109 538h1v3h-1zM109 544h1v3h-1zM109 550h1v2h-1z" fill="#778899"/>
<path d="M141 424h1v3h-1zM141 430h1v3h-1zM141 436h1v3h-1zM141 442h1v3h-1zM141 448h1v3h-1zM141 454h1v3h-1zM141 460h1v3h-1zM141 466h1v3h-1zM141 472h1v3h-1zM141 478h1v3h-1zM141 484h1v3h-1zM141 490h1v3h-1zM141 496h1v3h-1zM141 502h1v3h-1zM141 508h1v3h-1zM141 514h1v3h-1zM141 520h1v3h-1zM141 526h1v3h-1zM141 532h1v3h-1zM141 538h1v3h-1zM141 544h1v3h-1zM141 550h1v2h-1z" fill="#778899"/>
<path d="M173 424h1v3h-1zM173 430h1v3h-1zM173 436h1v3h-1zM173 442h1v3h-1zM173 448h1v3h-1zM173 454h1v3h-1zM173 460h1v3h-1zM173 466h1v3h-1zM173 472h1v3h-1zM173 478h1v3h-1zM173 484h1v3h-1zM173 490h1v3h-1zM173 496h1v3h-1zM173 502h1v3h-1zM173 508h1v3h-1zM173 514h1v3h-1zM173 520h1v3h-1zM173 526h1v3h-1zM173 532h1v3h-1zM173 538h1v3h-1zM173 544h1v3h-1zM173 550h1v2h-1z" fill="#778899"/>
<path d="M205 424h1v3h-1zM205 430h1v3h-1zM205 436h1v3h-1zM205 442h1v3h-1zM205 448h1v3h-1zM205 454h1v3h-1zM205 460h1v3h-1zM205 466h1v3h-1zM205 472h1v3h-1zM205 478h1v3h-1zM205 484h1v3h-1zM205 490h1v3h-1zM205 496h1v3h-1zM205 502h1v3h-1zM205 508h1v3h-1zM205 514h1v3h-1zM205 520h1v3h-1zM205 526h1v3h-1zM205 532h1v3h-1zM205 538h1v3h-1zM205 544h1v3h-1zM205 550h1v2h-1z" fill="#778899"/>
<path d="M237 424h1v3h-1zM237 430h1v3h-1zM237 436h1v3h-1zM237 442h1v3h-1zM237 448h1v3h-1zM237 454h1v3h-1zM237 460h1v3h-1zM237 466h1v3h-1zM237 472h1v3h-1zM237 478h1v3h-1zM237 484h1v3h-1zM237 490h1v3h-1zM237 496h1v3h-1zM237 502h1v3h-1zM237 508h1v3h-1zM237 514h1v3h-1zM237 520h1v3h-1zM237 526h1v3h-1zM237 532h1v3h-1zM237 538h1v3h-1zM237 544h1v3h-1zM237 550h1v2h-1z" fill="#778899"/>
<path d="M269 424h1v3h-1zM269 430h1v3h-1zM269 436h1v3h-1zM269 442h1v3h-1zM269 448h1v3h-1zM269 454h1v3h-1zM269 460h1v3h-1zM269 466h1v3h-1zM269 472h1v3h-1zM269 478h1v3h-1zM269 484h1v3h-1zM269 490h1v3h-1zM269 496h1v3h-1zM269 502h1v3h-1zM269 508h1v3h-1zM269 514h1v3h-1zM269 520h1v3h-1zM269 526h1v3h-1zM269 532h1v3h-1zM269 538h1v3h-1zM269 544h1v3h-1zM269 550h1v2h-1z" fill="#778899"/>
<path d="M301 424h1v3h-1zM301 430h1v3h-1zM301 436h1v3h-1zM301 442h1v3h-1zM301 448h1v3h-1zM301 454h1v3h-1zM301 460h1v3h-1zM301 466h1v3h-1zM301 472h1v3h-1zM301 478h1v3h-1zM301 484h1v3h-1zM301 490h1v3h-1zM301 496h1v3h-1zM301 502h1v3h-1zM301 508h1v3h-1zM301 514h1v3h-1zM301 520h1v3h-1zM301 526h1v3h-1zM301 532h1v3h-1zM301 538h1v3h-1zM301 544h1v3h-1zM301 550h1v2h-1z" fill="#778899"/>
<path d="M333 424h1v3h-1zM333 430h1v3h-1zM333 436h1v3h-1zM333 442h1v3h-1zM333 448h1v3h-1zM333 454h1v3h-1zM333 460h1v3h-1zM333 466h1v3h-1zM333 472h1v3h-1zM333 478h1v3h-1zM333 484h1v3h-1zM333 490h1v3h-1zM333 496h1v3h-1zM333 502h1v3h-1zM333 508h1v3h-1zM333 514h1v3h-1zM333 520h1v3h-1zM333 526h1v3h-1zM333 532h1v3h-1zM333 538h1v3h-1zM333 544h1v3h-1zM333 550h1v2h-1z" fill="#778899"/>
<path d="M365 424h1v3h-1zM365 430h1v3h-1zM365 436h1v3h-1zM365 442h1v3h-1zM365 448h1v3h-1zM365 454h1v3h-1zM365 460h1v3h-1zM365 466h1v3h-1zM365 472h1v3h-1zM365 478h1v3h-1zM365 484h1v3h-1zM365 490h1v3h-1zM365 496h1v3h-1zM365 502h1v3h-1zM365 508h1v3h-1zM365 514h1v3h-1zM365 520h1v3h-1zM365 526h1v3h-1zM365 532h1v3h-1zM365 538h1v3h-1zM365 544h1v3h-1zM365 550h1v2h-1z" fill="#778899"/>
<path d="M397 424h1v3h-1zM397 430h1v3h-1zM397 436h1v3h-1zM397 442h1v3h-1zM397 448h1v3h-1zM397 454h1v3h-1zM397 460h1v3h-1zM397 466h1v3h-1zM397 472h1v3h-1zM397 478h1v3h-1zM397 484h1v3h-1zM397 490h1v3h-1zM397 496h1v3h-1zM397 502h1v3h-1zM397 508h1v3h-1zM397 514h1v3h-1zM397 520h1v3h-1zM397 526h1v3h-1zM397 532h1v3h-1zM397 538h1v3h-1zM397 544h1v3h-1zM397 550h1v2h-1z" fill="#778899"/>
<path d="M429 424h1v3h-1zM429 430h1v3h-1zM429 436h1v3h-1zM429 442h1v3h-1zM429 448h1v3h-1zM429 454h1v3h-1zM429 460h1v3h-1zM429 466h1v3h-1zM429 472h1v3h-1zM429 478h1v3h-1zM429 484h1v3h-1zM429 490h1v3h-1zM429 496h1v3h-1zM429 502h1v3h-1zM429 508h1v3h-1zM429 514h1v3h-1zM429 520h1v3h-1zM429 526h1v3h-1zM429 532h1v3h-1zM429 538h1v3h-1zM429 544h1v3h-1zM429 550h1v2h-1z" fill="#778899"/>
<path d="M461 424h1v3h-1zM461 430h1v3h-1zM461 436h1v3h-1zM461 442h1v3h-1zM461 448h1v3h-1zM461 454h1v3h-1zM461 460h1v3h-1zM461 466h1v3h-1zM461 472h1v3h-1zM461 478h1v3h-1zM461 484h1v3h-1zM461 490h1v3h-1zM461 496h1v3h-1zM461 502h1v3h-1zM461 508h1v3h-1zM461 514h1v3h-1zM461 520h1v3h-1zM461 526h1v3h-1zM461 532h1v3h-1zM461 538h1v3h-1zM461 544h1v3h-1zM461 550h1v2h-1z" fill="#778899"/>
<path d="M493 424h1v3h-1zM493 430h1v3h-1zM493 436h1v3h-1zM493 442h1v3h-1zM493 448h1v3h-1zM493 454h1v3h-1zM493 460h1v3h-1zM493 466h1v3h-1zM493 472h1v3h-1zM493 478h1v3h-1zM493 484h1v3h-1zM493 490h1v3h-1zM493 496h1v3h-1zM493 502h1v3h-1zM493 508h1v3h-1zM493 514h1v3h-1zM493 520h1v3h-1zM493 526h1v3h-1zM493 532h1v3h-1zM493 538h1v3h-1zM493 544h1v3h-1zM493 550h1v2h-1z" fill="#778899"/>
<path d="M525 424h1v3h-1zM525 430h1v3h-1zM525 436h1v3h-1zM525 442h1v3h-1zM525 448h1v3h-1zM525 454h1v3h-1zM525 460h1v3h-1zM525 466h1v3h-1zM525 472h1v3h-1zM525 478h1v3h-1zM525 484h1v3h-1zM525 490h1v3h-1zM525 496h1v3h-1zM525 502h1v3h-1zM525 508h1v3h-1zM525 514h1v3h-1zM525 520h1v3h-1zM525 526h1v3h-1zM525 532h1v3h-1zM525 538h1v3h-1zM525 544h1v3h-1zM525 550h1v2h-1z" fill="#778899"/>
<path d="M557 424h1v3h-1zM557 430h1v3h-1zM557 436h1v3h-1zM557 442h1v3h-1zM557 448h1v3h-1zM557 454h1v3h-1zM557 460h1v3h-1zM557 466h1v3h-1zM557 472h1v3h-1zM557 478h1v3h-1zM557 484h1v3h-1zM557 490h1v3h-1zM557 496h1v3h-1zM557 502h1v3h-1zM557 508h1v3h-1zM557 514h1v3h-1zM557 520h1v3h-1zM557 526h1v3h-1zM557 532h1v3h-1zM557 538h1v3h-1zM557 544h1v3h-1zM557 550h1v2h-1z" fill="#778899"/>
<path d="M589 424h1v3h-1zM589 430h1v3h-1zM589 436h1v3h-1zM589 442h1v3h-1zM589 448h1v3h-1zM589 454h1v3h-1zM589 460h1v3h-1zM589 466h1v3h-1zM589 472h1v3h-1zM589 478h1v3h-1zM589 484h1v3h-1zM589 490h1v3h-1zM589 496h1v3h-1zM589 502h1v3h-1zM589 508h1v3h-1zM589 514h1v3h-1zM589 520h1v3h-1zM589 526h1v3h-1zM589 532h1v3h-1zM589 538h1v3h-1zM589 544h1v3h-1zM589 550h1v2h-1z" fill="#778899"/>
<path d="M621 424h1v3h-1zM621 430h1v3h-1zM621 436h1v3h-1zM621 442h1v3h-1zM621 448h1v3h-1zM621 454h1v3h-1zM621 460h1v3h-1zM621 466h1v3h-1zM621 472h1v3h-1zM621 478h1v3h-1zM621 484h1v3h-1zM621 490h1v3h-1zM621 496h1v3h-1zM621 502h1v3h-1zM621 508h1v3h-1zM621 514h1v3h-1zM621 520h1v3h-1zM621 526h1v3h-1zM621 532h1v3h-1zM621 538h1v3h-1zM621 544h1v3h-1zM621 550h1v2h-1z" fill="#778899"/>
<path d="M653 424h1v3h-1zM653 430h1v3h-1zM653 436h1v3h-1zM653 442h1v3h-1zM653 448h1v3h-1zM653 454h1v3h-1zM653 460h1v3h-1zM653 466h1v3h-1zM653 472h1v3h-1zM653 478h1v3h-1zM653 484h1v3h-1zM653 490h1v3h-1zM653 496h1v3h-1zM653 502h1v3h-1zM653 508h1v3h-1zM653 514h1v3h-1zM653 520h1v3h-1zM653 526h1v3h-1zM653 532h1v3h-1zM653 538h1v3h-1zM653 544h1v3h-1zM653 550h1v2h-1z" fill="#778899"/>
<path d="M14 53h3v1h-3zM20 53h3v1h-3zM26 53h3v1h-3zM32 53h3v1h-3zM38 53h3v1h-3zM44 53h3v1h-3zM50 53h3v1h-3zM56 53h3v1h-3zM62 53h3v1h-3zM68 53h3v1h-3zM74 53h3v1h-3zM80 53h3v1h-3zM86 53h3v1h-3zM92 53h3v1h-3zM98 53h3v1h-3zM104 53h3v1h-3zM110 53h3v1h-3zM116 53h3v1h-3zM122 53h3v1h-3zM128 53h3v1h-3zM134 53h3v1h-3zM140 53h3v1h-3zM146 53h3v1h-3zM152 53h3v1h-3zM158 53h3v1h-3zM164 53h3v1h-3zM170 53h3v1h-3zM176 53h3v1h-3zM182 53h3v1h-3zM188 53h3v1h-3zM194 53h3v1h-3zM200 53h3v1h-3zM206 53h3v1h-3zM212 53h3v1h-3zM218 53h3v1h-3zM224 53h3v1h-3zM230 53h3v1h-3zM236 53h3v1h-3zM242 53h3v1h-3zM248 53h3v1h-3zM254 53h3v1h-3zM260 53h3v1h-3zM266 53h3v1h-3zM272 53h3v1h-3zM278 53h3v1h-3zM284 53h3v1h-3zM290 53h3v1h-3zM296 53h3v1h-3zM302 53h3v1h-3zM308 53h3v1h-3zM314 53h3v1h-3zM320 53h3v1h-3zM326 53h3v1h-3zM332 53h3v1h-3zM338 53h3v1h-3zM344 53h3v1h-3zM350 53h3v1h-3zM356 53h3v1h-3zM362 53h3v1h-3zM368 53h3v1h-3zM374 53h3v1h-3zM380 53h3v1h-3zM386 53h3v1h-3zM392 53h3v1h-3zM398 53h3v1h-3zM404 53h3v1h-3zM410 53h3v1h-3zM416 53h3v1h-3zM422 53h3v1h-3zM428 53h3v1h-3zM434 53h3v1h-3zM440 53h3v1h-3zM446 53h3v1h-3zM452 53h3v1h-3zM458 53h3v1h-3zM464 53h3v1h-3zM470 53h3v1h-3zM476 53h3v1h-3zM482 53h3v1h-3zM488 53h3v1h-3zM494 53h3v1h-3zM500 53h3v1h-3zM506 53h3v1h-3zM512 53h3v1h-3zM518 53h3v1h-3zM524 53h3v1h-3zM530 53h3v1h-3zM536 53h3v1h-3zM542 53h3v1h-3zM548 53h3v1h-3zM554 53h3v1h-3zM560 53h3v1h-3zM566 53h3v1h-3zM572 53h3v1h-3zM578 53h3v1h-3zM584 53h3v1h-3zM590 53h3v1h-3zM596 53h3v1h-3zM602 53h3v1h-3zM608 53h3v1h-3zM614 53h3v1h-3zM620 53h3v1h-3zM626 53h3v1h-3zM632 53h3v1h-3zM638 53h3v1h-3zM644 53h3v1h-3zM650 53h3v1h-3zM656 53h3v1h-3zM662 53h3v1h-3zM668 53h3v1h-3zM674 53h3v1h-3z" fill="#778899"/>
<path d="M14 86h3v1h-3zM20 86h3v1h-3zM26 86h3v1h-3zM32 86h3v1h-3zM38 86h3v1h-3zM44 86h3v1h-3zM50 86h3v1h-3zM56 86h3v1h-3zM62 86h3v1h-3zM68 86h3v1h-3zM74 86h3v1h-3zM80 86h3v1h-3zM86 86h3v1h-3zM92 86h3v1h-3zM98 86h3v1h-3zM104 86h3v1h-3zM110 86h3v1h-3zM116 86h3v1h-3zM122 86h3v1h-3zM128 86h3v1h-3zM134 86h3v1h-3zM140 86h3v1h-3zM146 86h3v1h-3zM152 86h3v1h-3zM158 86h3v1h-3zM164 86h3v1h-3zM170 86h3v1h-3zM176 86h3v1h-3zM182 86h3v1h-3zM188 86h3v1h-3zM194 86h3v1h-3zM200 86h3v1h-3zM206 86h3v1h-3zM212 86h3v1h-3zM218 86h3v1h-3zM224 86h3v1h-3zM230 86h3v1h-3zM236 86h3v1h-3zM242 86h3v1h-3zM248 86h3v1h-3zM254 86h3v1h-3zM260 86h3v1h-3zM266 86h3v1h-3zM272 86h3v1h-3zM278 86h3v1h-3zM284 86h3v1h-3zM290 86h3v1h-3zM296 86h3v1h-3zM302 86h3v1h-3zM308 86h3v1h-3zM314 86h3v1h-3zM320 86h3v1h-3zM326 86h3v1h-3zM332 86h3v1h-3zM338 86h3v1h-3zM344 86h3v1h-3zM350 86h3v1h-3zM356 86h3v1h-3zM362 86h3v1h-3zM368 86h3v1h-3zM374 86h3v1h-3zM380 86h3v1h-3zM386 86h3v1h-3zM392 86h3v1h-3zM398 86h3v1h-3zM404 86h3v1h-3zM410 86h3v1h-3zM416 86h3v1h-3zM422 86h3v1h-3zM428 86h3v1h-3zM434 86h3v1h-3zM440 86h3v1h-3zM446 86h3v1h-3zM452 86h3v1h-3zM458 86h3v1h-3zM464 86h3v1h-3zM470 86h3v1h-3zM476 86h3v1h-3zM482 86h3v1h-3zM488 86h3v1h-3zM494 86h3v1h-3zM500 86h3v1h-3zM506 86h3v1h-3zM512 86h3v1h-3zM518 86h3v1h-3zM524 86h3v1h-3zM530 86h3v1h-3zM536 86h3v1h-3zM542 86h3v1h-3zM548 86h3v1h-3zM554 86h3v1h-3zM560 86h3v1h-3zM566 86h3v1h-3zM572 86h3v1h-3zM578 86h3v1h-3zM584 86h3v1h-3zM590 86h3v1h-3zM596 86h3v1h-3zM602 86h3v1h-3zM608 86h3v1h-3zM614 86h3v1h-3zM620 86h3v1h-3zM626 86h3v1h-3zM632 86h3v1h-3zM638 86h3v1h-3zM644 86h3v1h-3zM650 86h3v1h-3zM656 86h3v1h-3zM662 86h3v1h-3zM668 86h3v1h-3zM674 86h3v1h-3z" fill="#778899"/>
<path d="M14 119h3v1h-3zM20 119h3v1h-3zM26 119h3v1h-3zM32 119h3v1h-3zM38 119h3v1h-3zM44 119h3v1h-3zM50 119h3v1h-3zM56 119h3v1h-3zM62 119h3v1h-3zM68 119h3v1h-3zM74 119h3v1h-3zM80 119h3v1h-3zM86 119h3v1h-3zM92 119h3v1h-3zM98 119h3v1h-3zM104 119h3v1h-3zM110 119h3v1h-3zM116 119h3v1h-3zM122 119h3v1h-3zM128 119h3v1h-3zM134 119h3v1h-3zM140 119h3v1h-3zM146 119h3v1h-3zM152 119h3v1h-3zM158 119h3v1h-3zM164 119h3v1h-3zM170 119h3v1h-3zM176 119h3v1h-3zM182 119h3v1h-3zM188 119h3v1h-3zM194 119h3v1h-3zM200 119h3v1h-3zM206 119h3v1h-3zM212 119h3v1h-3zM218 119h3v1h-3zM224 119h3v1h-3zM230 119h3v1h-3zM236 119h3v1h-3zM242 119h3v1h-3zM248 119h3v1h-3zM254 119h3v1h-3zM260 119h3v1h-3zM266 119h3v1h-3zM272 119h3v1h-3zM278 119h3v1h-3zM284 119h3v1h-3zM290 119h3v1h-3zM296 119h3v1h-3zM302 119h3v1h-3zM308 119h3v1h-3zM314 119h3v1h-3zM320 119h3v1h-3zM326 119h3v1h-3zM332 119h3v1h-3zM338 119h3v1h-3zM344 119h3v1h-3zM350 119h3v1h-3zM356 119h3v1h-3zM362 119h3v1h-3zM368 119h3v1h-3zM374 119h3v1h-3zM380 119h3v1h-3zM386 119h3v1h-3zM392 119h3v1h-3zM398 119h3v1h-3zM404 119h3v1h-3zM410 119h3v1h-3zM416 119h3v1h-3zM422 119h3v1h-3zM428 119h3v1h-3zM434 119h3v1h-3zM440 119h3v1h-3zM446 119h3v1h-3zM452 119h3v1h-3zM458 119h3v1h-3zM464 119h3v1h-3zM470 119h3v1h-3zM476 119h3v1h-3zM482 119h3v1h-3zM488 119h3v1h-3zM494 119h3v1h-3zM500 119h3v1h-3zM506 119h3v1h-3zM512 119h3v1h-3zM518 119h3v1h-3zM524 119h3v1h-3zM530 119h3v1h-3zM536 119h3v1h-3zM542 119h3v1h-3zM548 119h3v1h-3zM554 119h3v1h-3zM560 119h3v1h-3zM566 119h3v1h-3zM572 119h3v1h-3zM578 119h3v1h-3zM584 119h3v1h-3zM590 119h3v1h-3zM596 119h3v1h-3zM602 119h3v1h-3zM608 119h3v1h-3zM614 119h3v1h-3zM620 119h3v1h-3zM626 119h3v1h-3zM632 119h3v1h-3zM638 119h3v1h-3zM644 119h3v1h-3zM650 119h3v1h-3zM656 119h3v1h-3zM662 119h3v1h-3zM668 119h3v1h-3zM674 119h3v1h-3z" fill="#778899"/>
<path d="M14 153h3v1h-3zM20 153h3v1h-3zM26 153h3v1h-3zM32 153h3v1h-3zM38 153h3v1h-3zM44 153h3v1h-3zM50 153h3v1h-3zM56 153h3v1h-3zM62 153h3v1h-3zM68 153h3v1h-3zM74 153h3v1h-3zM80 153h3v1h-3zM86 153h3v1h-3zM92 153h3v1h-3zM98 153h3v1h-3zM104 153h3v1h-3zM110 153h3v1h-3zM116 153h3v1h-3zM122 153h3v1h-3zM128 153h3v1h-3zM134 153h3v1h-3zM140 153h3v1h-3zM146 153h3v1h-3zM152 153h3v1h-3zM158 153h3v1h-3zM164 153h3v1h-3zM170 153h3v1h-3zM176 153h3v1h-3zM182 153h3v1h-3zM188 153h3v1h-3zM194 153h3v1h-3zM200 153h3v1h-3zM206 153h3v1h-3zM212 153h3v1h-3zM218 153h3v1h-3zM224 153h3v1h-3zM230 153h3v1h-3zM236 153h3v1h-3zM242 153h3v1h-3zM248 153h3v1h-3zM254 153h3v1h-3zM260 153h3v1h-3zM266 153h3v1h-3zM272 153h3v1h-3zM278 153h3v1h-3zM284 153h3v1h-3zM290 153h3v1h-3zM296 153h3v1h-3zM302 153h3v1h-3zM308 153h3v1h-3zM314 153h3v1h-3zM320 153h3v1h-3zM326 153h3v1h-3zM332 153h3v1h-3zM338 153h3v1h-3zM344 153h3v1h-3zM350 153h3v1h-3zM356 153h3v1h-3zM362 153h3v1h-3zM368 153h3v1h-3zM374 153h3v1h-3zM380 153h3v1h-3zM386 153h3v1h-3zM392 153h3v1h-3zM398 153h3v1h-3zM404 153h3v1h-3zM410 153h3v1h-3zM416 153h3v1h-3zM422 153h3v1h-3zM428 153h3v1h-3zM434 153h3v1h-3zM440 153h3v1h-3zM446 153h3v1h-3zM452 153h3v1h-3zM458 153h3v1h-3zM464 153h3v1h-3zM470 153h3v1h-3zM476 153h3v1h-3zM482 153h3v1h-3zM488 153h3v1h-3zM494 153h3v1h-3zM500 153h3v1h-3zM506 153h3v1h-3zM512 153h3v1h-3zM518 153h3v1h-3zM524 153h3v1h-3zM530 153h3v1h-3zM536 153h3v1h-3zM542 153h3v1h-3zM548 153h3v1h-3zM554 153h3v1h-3zM560 153h3v1h-3zM566 153h3v1h-3zM572 153h3v1h-3zM578 153h3v1h-3zM584 153h3v1h-3zM590 153h3v1h-3zM596 153h3v1h-3zM602 153h3v1h-3zM608 153h3v1h-3zM614 153h3v1h-3zM620 153h3v1h-3zM626 153h3v1h-3zM632 153h3v1h-3zM638 153h3v1h-3zM644 153h3v1h-3zM650 153h3v1h-3zM656 153h3v1h-3zM662 153h3v1h-3zM668 153h3v1h-3zM674 153h3v1h-3z" fill="#778899"/>
<path d="M14 186h3v1h-3zM20 186h3v1h-3zM26 186h3v1h-3zM32 186h3v1h-3zM38 186h3v1h-3zM44 186h3v1h-3zM50 186h3v1h-3zM56 186h3v1h-3zM62 186h3v1h-3zM68 186h3v1h-3zM74 186h3v1h-3zM80 186h3v1h-3zM86 186h3v1h-3zM92 186h3v1h-3zM98 186h3v1h-3zM104 186h3v1h-3zM110 186h3v1h-3zM116 186h3v1h-3zM122 186h3v1h-3zM128 186h3v1h-3zM134 186h3v1h-3zM140 186h3v1h-3zM146 186h3v1h-3zM152 186h3v1h-3zM158 186h3v1h-3zM164 186h3v1h-3zM170 186h3v1h-3zM176 186h3v1h-3zM182 186h3v1h-3zM188 186h3v1h-3zM194 186h3v1h-3zM200 186h3v1h-3zM206 186h3v1h-3zM212 186h3v1h-3zM218 186h3v1h-3zM224 186h3v1h-3zM230 186h3v1h-3zM236 186h3v1h-3zM242 186h3v1h-3zM248 186h3v1h-3zM254 186h3v1h-3zM260 186h3v1h-3zM266 186h3v1h-3zM272 186h3v1h-3zM278 186h3v1h-3zM284 186h3v1h-3zM290 186h3v1h-3zM296 186h3v1h-3zM302 186h3v1h-3zM308 186h3v1h-3zM314 186h3v1h-3zM320 186h3v1h-3zM326 186h3v1h-3zM332 186h3v1h-3zM338 186h3v1h-3zM344 186h3v1h-3zM350 186h3v1h-3zM356 186h3v1h-3zM362 186h3v1h-3zM368 186h3v1h-3zM374 186h3v1h-3zM380 186h3v1h-3zM386 186h3v1h-3zM392 186h3v1h-3zM398 186h3v1h-3zM404 186h3v1h-3zM410 186h3v1h-3zM416 186h3v1h-3zM422 186h3v1h-3zM428 186h3v1h-3zM434 186h3v1h-3zM440 186h3v1h-3zM446 186h3v1h-3zM452 186h3v1h-3zM458 186h3v1h-3zM464 186h3v1h-3zM470 186h3v1h-3zM476 186h3v1h-3zM482 186h3v1h-3zM488 186h3v1h-3zM494 186h3v1h-3zM500 186h3v1h-3zM506 186h3v1h-3zM512 186h3v1h-3zM518 186h3v1h-3zM524 186h3v1h-3zM530 186h3v1h-3zM536 186h3v1h-3zM542 186h3v1h-3zM548 186h3v1h-3zM554 186h3v1h-3zM560 186h3v1h-3zM566 186h3v1h-3zM572 186h3v1h-3zM578 186h3v1h-3zM584 186h3v1h-3zM590 186h3v1h-3zM596 186h3v1h-3zM602 186h3v1h-3zM608 186h3v1h-3zM614 186h3v1h-3zM620 186h3v1h-3zM626 186h3v1h-3zM632 186h3v1h-3zM638 186h3v1h-3zM644 186h3v1h-3zM650 186h3v1h-3zM656 186h3v1h-3zM662 186h3v1h-3zM668 186h3v1h-3zM674 186h3v1h-3z" fill="#778899"/>
<path d="M14 219h3v1h-3zM20 219h3v1h-3zM26 219h3v1h-3zM32 219h3v1h-3zM38 219h3v1h-3zM44 219h3v1h-3zM50 219h3v1h-3zM56 219h3v1h-3zM62 219h3v1h-3zM68 219h3v1h-3zM74 219h3v1h-3zM80 219h3v1h-3zM86 219h3v1h-3zM92 219h3v1h-3zM98 219h3v1h-3zM104 219h3v1h-3zM110 219h3v1h-3zM116 219h3v1h-3zM122 219h3v1h-3zM128 219h3v1h-3zM134 219h3v1h-3zM140 219h3v1h-3zM146 219h3v1h-3zM152 219h3v1h-3zM158 219h3v1h-3zM164 219h3v1h-3zM170 219h3v1h-3zM176 219h3v1h-3zM182 219h3v1h-3zM188 219h3v1h-3zM194 219h3v1h-3zM200 219h3v1h-3zM206 219h3v1h-3zM212 219h3v1h-3zM218 219h3v1h-3zM224 219h3v1h-3zM230 219h3v1h-3zM236 219h3v1h-3zM242 219h3v1h-3zM248 219h3v1h-3zM254 219h3v1h-3zM260 219h3v1h-3zM266 219h3v1h-3zM272 219h3v1h-3zM278 219h3v1h-3zM284 219h3v1h-3zM290 219h3v1h-3zM296 219h3v1h-3zM302 219h3v1h-3zM308 219h3v1h-3zM314 219h3v1h-3zM320 219h3v1h-3zM326 219h3v1h-3zM332 219h3v1h-3zM338 219h3v1h-3zM344 219h3v1h-3zM350 219h3v1h-3zM356 219h3v1h-3zM362 219h3v1h-3zM368 219h3v1h-3zM374 219h3v1h-3zM380 219h3v1h-3zM386 219h3v1h-3zM392 219h3v1h-3zM398 219h3v1h-3zM404 219h3v1h-3zM410 219h3v1h-3zM416 219h3v1h-3zM422 219h3v1h-3zM428 219h3v1h-3zM434 219h3v1h-3zM440 219h3v1h-3zM446 219h3v1h-3zM452 219h3v1h-3zM458 219h3v1h-3zM464 219h3v1h-3zM470 219h3v1h-3zM476 219h3v1h-3zM482 219h3v1h-3zM488 219h3v1h-3zM494 219h3v1h-3zM500 219h3v1h-3zM506 219h3v1h-3zM512 219h3v1h-3zM518 219h3v1h-3zM524 219h3v1h-3zM530 219h3v1h-3zM536 219h3v1h-3zM542 219h3v1h-3zM548 219h3v1h-3zM554 219h3v1h-3zM560 219h3v1h-3zM566 219h3v1h-3zM572 219h3v1h-3zM578 219h3v1h-3zM584 219h3v1h-3zM590 219h3v1h-3zM596 219h3v1h-3zM602 219h3v1h-3zM608 219h3v1h-3zM614 219h3v1h-3zM620 219h3v1h-3zM626 219h3v1h-3zM632 219h3v1h-3zM638 219h3v1h-3zM644 219h3v1h-3zM650 219h3v1h-3zM656 219h3v1h-3zM662 219h3v1h-3zM668 219h3v1h-3zM674 219h3v1h-3z" fill="#778899"/>
<path d="M14 252h3v1h-3zM20 252h3v1h-3zM26 252h3v1h-3zM32 252h3v1h-3zM38 252h3v1h-3zM44 252h3v1h-3zM50 252h3v1h-3zM56 252h3v1h-3zM62 252h3v1h-3zM68 252h3v1h-3zM74 252h3v1h-3zM80 252h3v1h-3zM86 252h3v1h-3zM92 252h3v1h-3zM98 252h3v1h-3zM104 252h3v1h-3zM110 252h3v1h-3zM116 252h3v1h-3zM122 252h3v1h-3zM128 252h3v1h-3zM134 252h3v1h-3zM140 252h3v1h-3zM146 252h3v1h-3zM152 252h3v1h-3zM158 252h3v1h-3zM164 252h3v1h-3zM170 252h3v1h-3zM176 252h3v1h-3zM182 252h3v1h-3zM188 252h3v1h-3zM194 252h3v1h-3zM200 252h3v1h-3zM206 252h3v1h-3zM212 252h3v1h-3zM218 252h3v1h-3zM224 252h3v1h-3zM230 252h3v1h-3zM236 252h3v1h-3zM242 252h3v1h-3zM248 252h3v1h-3zM254 252h3v1h-3zM260 252h3v1h-3zM266 252h3v1h-3zM272 252h3v1h-3zM278 252h3v1h-3zM284 252h3v1h-3zM290 252h3v1h-3zM296 252h3v1h-3zM302 252h3v1h-3zM308 252h3v1h-3zM314 252h3v1h-3zM320 252h3v1h-3zM326 252h3v1h-3zM332 252h3v1h-3zM338 252h3v1h-3zM344 252h3v1h-3zM350 252h3v1h-3zM356 252h3v1h-3zM362 252h3v1h-3zM368 252h3v1h-3zM374 252h3v1h-3zM380 252h3v1h-3zM386 252h3v1h-3zM392 252h3v1h-3zM398 252h3v1h-3zM404 252h3v1h-3zM410 252h3v1h-3zM416 252h3v1h-3zM422 252h3v1h-3zM428 252h3v1h-3zM434 252h3v1h-3zM440 252h3v1h-3zM446 252h3v1h-3zM452 252h3v1h-3zM458 252h3v1h-3zM464 252h3v1h-3zM470 252h3v1h-3zM476 252h3v1h-3zM482 252h3v1h-3zM488 252h3v1h-3zM494 252h3v1h-3zM500 252h3v1h-3zM506 252h3v1h-3zM512 252h3v1h-3zM518 252h3v1h-3zM524 252h3v1h-3zM530 252h3v1h-3zM536 252h3v1h-3zM542 252h3v1h-3zM548 252h3v1h-3zM554 252h3v1h-3zM560 252h3v1h-3zM566 252h3v1h-3zM572 252h3v1h-3zM578 252h3v1h-3zM584 252h3v1h-3zM590 252h3v1h-3zM596 252h3v1h-3zM602 252h3v1h-3zM608 252h3v1h-3zM614 252h3v1h-3zM620 252h3v1h-3zM626 252h3v1h-3zM632 252h3v1h-3zM638 252h3v1h-3zM644 252h3v1h-3zM650 252h3v1h-3zM656 252h3v1h-3zM662 252h3v1h-3zM668 252h3v1h-3zM674 252h3v1h-3z" fill="#778899"/>
<path d="M14 285h3v1h-3zM20 285h3v1h-3zM26 285h3v1h-3zM32 285h3v1h-3zM38 285h3v1h-3zM44 285h3v1h-3zM50 285h3v1h-3zM56 285h3v1h-3zM62 285h3v1h-3zM68 285h3v1h-3zM74 285h3v1h-3zM80 285h3v1h-3zM86 285h3v1h-3zM92 285h3v1h-3zM98 285h3v1h-3zM104 285h3v1h-3zM110 285h3v1h-3zM116 285h3v1h-3zM122 285h3v1h-3zM128 285h3v1h-3zM134 285h3v1h-3zM140 285h3v1h-3zM146 285h3v1h-3zM152 285h3v1h-3zM158 285h3v1h-3zM164 285h3v1h-3zM170 285h3v1h-3zM176 285h3v1h-3zM182 285h3v1h-3zM188 285h3v1h-3zM194 285h3v1h-3zM200 285h3v1h-3zM206 285h3v1h-3zM212 285h3v1h-3zM218 285h3v1h-3zM224 285h3v1h-3zM230 285h3v1h-3zM236 285h3v1h-3zM242 285h3v1h-3zM248 285h3v1h-3zM254 285h3v1h-3zM260 285h3v1h-3zM266 285h3v1h-3zM272 285h3v1h-3zM278 285h3v1h-3zM284 285h3v1h-3zM290 285h3v1h-3zM296 285h3v1h-3zM302 285h3v1h-3zM308 285h3v1h-3zM314 285h3v1h-3zM320 285h3v1h-3zM326 285h3v1h-3zM332 285h3v1h-3zM338 285h3v1h-3zM344 285h3v1h-3zM350 285h3v1h-3zM356 285h3v1h-3zM362 285h3v1h-3zM368 285h3v1h-3zM374 285h3v1h-3zM380 285h3v1h-3zM386 285h3v1h-3zM392 285h3v1h-3zM398 285h3v1h-3zM404 285h3v1h-3zM410 285h3v1h-3zM416 285h3v1h-3zM422 285h3v1h-3zM428 285h3v1h-3zM434 285h3v1h-3zM440 285h3v1h-3zM446 285h3v1h-3zM452 285h3v1h-3zM458 285h3v1h-3zM464 285h3v1h-3zM470 285h3v1h-3zM476 285h3v1h-3zM482 285h3v1h-3zM488 285h3v1h-3zM494 285h3v1h-3zM500 285h3v1h-3zM506 285h3v1h-3zM512 285h3v1h-3zM518 285h3v1h-3zM524 285h3v1h-3zM530 285h3v1h-3zM536 285h3v1h-3zM542 285h3v1h-3zM548 285h3v1h-3zM554 285h3v1h-3zM560 285h3v1h-3zM566 285h3v1h-3zM572 285h3v1h-3zM578 285h3v1h-3zM584 285h3v1h-3zM590 285h3v1h-3zM596 285h3v1h-3zM602 285h3v1h-3zM608 285h3v1h-3zM614 285h3v1h-3zM620 285h3v1h-3zM626 285h3v1h-3zM632 285h3v1h-3zM638 285h3v1h-3zM644 285h3v1h-3zM650 285h3v1h-3zM656 285h3v1h-3zM662 285h3v1h-3zM668 285h3v1h-3zM674 285h3v1h-3z" fill="#778899"/>
<path d="M14 303h3v1h-3zM20 303h3v1h-3zM26 303h3v1h-3zM32 303h3v1h-3zM38 303h3v1h-3zM44 303h3v1h-3zM50 303h3v1h-3zM56 303h3v1h-3zM62 303h3v1h-3zM68 303h3v1h-3zM74 303h3v1h-3zM80 303h3v1h-3zM86 303h3v1h-3zM92 303h3v1h-3zM98 303h3v1h-3zM104 303h3v1h-3zM110 303h3v1h-3zM116 303h3v1h-3zM122 303h3v1h-3zM128 303h3v1h-3zM134 303h3v1h-3zM140 303h3v1h-3zM146 303h3v1h-3zM152 303h3v1h-3zM158 303h3v1h-3zM164 303h3v1h-3zM170 303h3v1h-3zM176 303h3v1h-3zM182 303h3v1h-3zM188 303h3v1h-3zM194 303h3v1h-3zM200 303h3v1h-3zM206 303h3v1h-3zM212 303h3v1h-3zM218 303h3v1h-3zM224 303h3v1h-3zM230 303h3v1h-3zM236 303h3v1h-3zM242 303h3v1h-3zM248 303h3v1h-3zM254 303h3v1h-3zM260 303h3v1h-3zM266 303h3v1h-3zM272 303h3v1h-3zM278 303h3v1h-3zM284 303h3v1h-3zM290 303h3v1h-3zM296 303h3v1h-3zM302 303h3v1h-3zM308 303h3v1h-3zM314 303h3v1h-3zM320 303h3v1h-3zM326 303h3v1h-3zM332 303h3v1h-3zM338 303h3v1h-3zM344 303h3v1h-3zM350 303h3v1h-3zM356 303h3v1h-3zM362 303h3v1h-3zM368 303h3v1h-3zM374 303h3v1h-3zM380 303h3v1h-3zM386 303h3v1h-3zM392 303h3v1h-3zM398 303h3v1h-3zM404 303h3v1h-3zM410 303h3v1h-3zM416 303h3v1h-3zM422 303h3v1h-3zM428 303h3v1h-3zM434 303h3v1h-3zM440 303h3v1h-3zM446 303h3v1h-3zM452 303h3v1h-3zM458 303h3v1h-3zM464 303h3v1h-3zM470 303h3v1h-3zM476 303h3v1h-3zM482 303h3v1h-3zM488 303h3v1h-3zM494 303h3v1h-3zM500 303h3v1h-3zM506 303h3v1h-3zM512 303h3v1h-3zM518 303h3v1h-3zM524 303h3v1h-3zM530 303h3v1h-3zM536 303h3v1h-3zM542 303h3v1h-3zM548 303h3v1h-3zM554 303h3v1h-3zM560 303h3v1h-3zM566 303h3v1h-3zM572 303h3v1h-3zM578 303h3v1h-3zM584 303h3v1h-3zM590 303h3v1h-3zM596 303h3v1h-3zM602 303h3v1h-3zM608 303h3v1h-3zM614 303h3v1h-3zM620 303h3v1h-3zM626 303h3v1h-3zM632 303h3v1h-3zM638 303h3v1h-3zM644 303h3v1h-3zM650 303h3v1h-3zM656 303h3v1h-3zM662 303h3v1h-3zM668 303h3v1h-3zM674 303h3v1h-3z" fill="#c0c0c0"/>
<path d="M14 314h3v1h-3zM20 314h3v1h-3zM26 314h3v1h-3zM32 314h3v1h-3zM38 314h3v1h-3zM44 314h3v1h-3zM50 314h3v1h-3zM56 314h3v1h-3zM62 314h3v1h-3zM68 314h3v1h-3zM74 314h3v1h-3zM80 314h3v1h-3zM86 314h3v1h-3zM92 314h3v1h-3zM98 314h3v1h-3zM104 314h3v1h-3zM110 314h3v1h-3zM116 314h3v1h-3zM122 314h3v1h-3zM128 314h3v1h-3zM134 314h3v1h-3zM140 314h3v1h-3zM146 314h3v1h-3zM152 314h3v1h-3zM158 314h3v1h-3zM164 314h3v1h-3zM170 314h3v1h-3zM176 314h3v1h-3zM182 314h3v1h-3zM188 314h3v1h-3zM194 314h3v1h-3zM200 314h3v1h-3zM206 314h3v1h-3zM212 314h3v1h-3zM218 314h3v1h-3zM224 314h3v1h-3zM230 314h3v1h-3zM236 314h3v1h-3zM242 314h3v1h-3zM248 314h3v1h-3zM254 314h3v1h-3zM260 314h3v1h-3zM266 314h3v1h-3zM272 314h3v1h-3zM278 314h3v1h-3zM284 314h3v1h-3zM290 314h3v1h-3zM296 314h3v1h-3zM302 314h3v1h-3zM308 314h3v1h-3zM314 314h3v1h-3zM320 314h3v1h-3zM326 314h3v1h-3zM332 314h3v1h-3zM338 314h3v1h-3zM344 314h3v1h-3zM350 314h3v1h-3zM356 314h3v1h-3zM362 314h3v1h-3zM368 314h3v1h-3zM374 314h3v1h-3zM380 314h3v1h-3zM386 314h3v1h-3zM392 314h3v1h-3zM398 314h3v1h-3zM404 314h3v1h-3zM410 314h3v1h-3zM416 314h3v1h-3zM422 314h3v1h-3zM428 314h3v1h-3zM434 314h3v1h-3zM440 314h3v1h-3zM446 314h3v1h-3zM452 314h3v1h-3zM458 314h3v1h-3zM464 314h3v1h-3zM470 314h3v1h-3zM476 314h3v1h-3zM482 314h3v1h-3zM488 314h3v1h-3zM494 314h3v1h-3zM500 314h3v1h-3zM506 314h3v1h-3zM512 314h3v1h-3zM518 314h3v1h-3zM524 314h3v1h-3zM530 314h3v1h-3zM536 314h3v1h-3zM542 314h3v1h-3zM548 314h3v1h-3zM554 314h3v1h-3zM560 314h3v1h-3zM566 314h3v1h-3zM572 314h3v1h-3zM578 314h3v1h-3zM584 314h3v1h-3zM590 314h3v1h-3zM596 314h3v1h-3zM602 314h3v1h-3zM608 314h3v1h-3zM614 314h3v1h-3zM620 314h3v1h-3zM626 314h3v1h-3zM632 314h3v1h-3zM638 314h3v1h-3zM644 314h3v1h-3zM650 314h3v1h-3zM656 314h3v1h-3zM662 314h3v1h-3zM668 314h3v1h-3zM674 314h3v1h-3z" fill="#c0c0c0"/>
<path d="M14 332h3v1h-3zM20 332h3v1h-3zM26 332h3v1h-3zM32 332h3v1h-3zM38 332h3v1h-3zM44 332h3v1h-3zM50 332h3v1h-3zM56 332h3v1h-3zM62 332h3v1h-3zM68 332h3v1h-3zM74 332h3v1h-3zM80 332h3v1h-3zM86 332h3v1h-3zM92 332h3v1h-3zM98 332h3v1h-3zM104 332h3v1h-3zM110 332h3v1h-3zM116 332h3v1h-3zM122 332h3v1h-3zM128 332h3v1h-3zM134 332h3v1h-3zM140 332h3v1h-3zM146 332h3v1h-3zM152 332h3v1h-3zM158 332h3v1h-3zM164 332h3v1h-3zM170 332h3v1h-3zM176 332h3v1h-3zM182 332h3v1h-3zM188 332h3v1h-3zM194 332h3v1h-3zM200 332h3v1h-3zM206 332h3v1h-3zM212 332h3v1h-3zM218 332h3v1h-3zM224 332h3v1h-3zM230 332h3v1h-3zM236 332h3v1h-3zM242 332h3v1h-3zM248 332h3v1h-3zM254 332h3v1h-3zM260 332h3v1h-3zM266 332h3v1h-3zM272 332h3v1h-3zM278 332h3v1h-3zM284 332h3v1h-3zM290 332h3v1h-3zM296 332h3v1h-3zM302 332h3v1h-3zM308 332h3v1h-3zM314 332h3v1h-3zM320 332h3v1h-3zM326 332h3v1h-3zM332 332h3v1h-3zM338 332h3v1h-3zM344 332h3v1h-3zM350 332h3v1h-3zM356 332h3v1h-3zM362 332h3v1h-3zM368 332h3v1h-3zM374 332h3v1h-3zM380 332h3v1h-3zM386 332h3v1h-3zM392 332h3v1h-3zM398 332h3v1h-3zM404 332h3v1h-3zM410 332h3v1h-3zM416 332h3v1h-3zM422 332h3v1h-3zM428 332h3v1h-3zM434 332h3v1h-3zM440 332h3v1h-3zM446 332h3v1h-3zM452 332h3v1h-3zM458 332h3v1h-3zM464 332h3v1h-3zM470 332h3v1h-3zM476 332h3v1h-3zM482 332h3v1h-3zM488 332h3v1h-3zM494 332h3v1h-3zM500 332h3v1h-3zM506 332h3v1h-3zM512 332h3v1h-3zM518 332h3v1h-3zM524 332h3v1h-3zM530 332h3v1h-3zM536 332h3v1h-3zM542 332h3v1h-3zM548 332h3v1h-3zM554 332h3v1h-3zM560 332h3v1h-3zM566 332h3v1h-3zM572 332h3v1h-3zM578 332h3v1h-3zM584 332h3v1h-3zM590 332h3v1h-3zM596 332h3v1h-3zM602 332h3v1h-3zM608 332h3v1h-3zM614 332h3v1h-3zM620 332h3v1h-3zM626 332h3v1h-3zM632 332h3v1h-3zM638 332h3v1h-3zM644 332h3v1h-3zM650 332h3v1h-3zM656 332h3v1h-3zM662 332h3v1h-3zM668 332h3v1h-3zM674 332h3v1h-3z" fill="#c0c0c0"/>
<path d="M14 360h3v1h-3zM20 360h3v1h-3zM26 360h3v1h-3zM32 360h3v1h-3zM38 360h3v1h-3zM44 360h3v1h-3zM50 360h3v1h-3zM56 360h3v1h-3zM62 360h3v1h-3zM68 360h3v1h-3zM74 360h3v1h-3zM80 360h3v1h-3zM86 360h3v1h-3zM92 360h3v1h-3zM98 360h3v1h-3zM104 360h3v1h-3zM110 360h3v1h-3zM116 360h3v1h-3zM122 360h3v1h-3zM128 360h3v1h-3zM134 360h3v1h-3zM140 360h3v1h-3zM146 360h3v1h-3zM152 360h3v1h-3zM158 360h3v1h-3zM164 360h3v1h-3zM170 360h3v1h-3zM176 360h3v1h-3zM182 360h3v1h-3zM188 360h3v1h-3zM194 360h3v1h-3zM200 360h3v1h-3zM206 360h3v1h-3zM212 360h3v1h-3zM218 360h3v1h-3zM224 360h3v1h-3zM230 360h3v1h-3zM236 360h3v1h-3zM242 360h3v1h-3zM248 360h3v1h-3zM254 360h3v1h-3zM260 360h3v1h-3zM266 360h3v1h-3zM272 360h3v1h-3zM278 360h3v1h-3zM284 360h3v1h-3zM290 360h3v1h-3zM296 360h3v1h-3zM302 360h3v1h-3zM308 360h3v1h-3zM314 360h3v1h-3zM320 360h3v1h-3zM326 360h3v1h-3zM332 360h3v1h-3zM338 360h3v1h-3zM344 360h3v1h-3zM350 360h3v1h-3zM356 360h3v1h-3zM362 360h3v1h-3zM368 360h3v1h-3zM374 360h3v1h-3zM380 360h3v1h-3zM386 360h3v1h-3zM392 360h3v1h-3zM398 360h3v1h-3zM404 360h3v1h-3zM410 360h3v1h-3zM416 360h3v1h-3zM422 360h3v1h-3zM428 360h3v1h-3zM434 360h3v1h-3zM440 360h3v1h-3zM446 360h3v1h-3zM452 360h3v1h-3zM458 360h3v1h-3zM464 360h3v1h-3zM470 360h3v1h-3zM476 360h3v1h-3zM482 360h3v1h-3zM488 360h3v1h-3zM494 360h3v1h-3zM500 360h3v1h-3zM506 360h3v1h-3zM512 360h3v1h-3zM518 360h3v1h-3zM524 360h3v1h-3zM530 360h3v1h-3zM536 360h3v1h-3zM542 360h3v1h-3zM548 360h3v1h-3zM554 360h3v1h-3zM560 360h3v1h-3zM566 360h3v1h-3zM572 360h3v1h-3zM578 360h3v1h-3zM584 360h3v1h-3zM590 360h3v1h-3zM596 360h3v1h-3zM602 360h3v1h-3zM608 360h3v1h-3zM614 360h3v1h-3zM620 360h3v1h-3zM626 360h3v1h-3zM632 360h3v1h-3zM638 360h3v1h-3zM644 360h3v1h-3zM650 360h3v1h-3zM656 360h3v1h-3zM662 360h3v1h-3zM668 360h3v1h-3zM674 360h3v1h-3z" fill="#c0c0c0"/>
<path d="M14 389h3v1h-3zM20 389h3v1h-3zM26 389h3v1h-3zM32 389h3v1h-3zM38 389h3v1h-3zM44 389h3v1h-3zM50 389h3v1h-3zM56 389h3v1h-3zM62 389h3v1h-3zM68 389h3v1h-3zM74 389h3v1h-3zM80 389h3v1h-3zM86 389h3v1h-3zM92 389h3v1h-3zM98 389h3v1h-3zM104 389h3v1h-3zM110 389h3v1h-3zM116 389h3v1h-3zM122 389h3v1h-3zM128 389h3v1h-3zM134 389h3v1h-3zM140 389h3v1h-3zM146 389h3v1h-3zM152 389h3v1h-3zM158 389h3v1h-3zM164 389h3v1h-3zM170 389h3v1h-3zM176 389h3v1h-3zM182 389h3v1h-3zM188 389h3v1h-3zM194 389h3v1h-3zM200 389h3v1h-3zM206 389h3v1h-3zM212 389h3v1h-3zM218 389h3v1h-3zM224 389h3v1h-3zM230 389h3v1h-3zM236 389h3v1h-3zM242 389h3v1h-3zM248 389h3v1h-3zM254 389h3v1h-3zM260 389h3v1h-3zM266 389h3v1h-3zM272 389h3v1h-3zM278 389h3v1h-3zM284 389h3v1h-3zM290 389h3v1h-3zM296 389h3v1h-3zM302 389h3v1h-3zM308 389h3v1h-3zM314 389h3v1h-3zM320 389h3v1h-3zM326 389h3v1h-3zM332 389h3v1h-3zM338 389h3v1h-3zM344 389h3v1h-3zM350 389h3v1h-3zM356 389h3v1h-3zM362 389h3v1h-3zM368 389h3v1h-3zM374 389h3v1h-3zM380 389h3v1h-3zM386 389h3v1h-3zM392 389h3v1h-3zM398 389h3v1h-3zM404 389h3v1h-3zM410 389h3v1h-3zM416 389h3v1h-3zM422 389h3v1h-3zM428 389h3v1h-3zM434 389h3v1h-3zM440 389h3v1h-3zM446 389h3v1h-3zM452 389h3v1h-3zM458 389h3v1h-3zM464 389h3v1h-3zM470 389h3v1h-3zM476 389h3v1h-3zM482 389h3v1h-3zM488 389h3v1h-3zM494 389h3v1h-3zM500 389h3v1h-3zM506 389h3v1h-3zM512 389h3v1h-3zM518 389h3v1h-3zM524 389h3v1h-3zM530 389h3v1h-3zM536 389h3v1h-3zM542 389h3v1h-3zM548 389h3v1h-3zM554 389h3v1h-3zM560 389h3v1h-3zM566 389h3v1h-3zM572 389h3v1h-3zM578 389h3v1h-3zM584 389h3v1h-3zM590 389h3v1h-3zM596 389h3v1h-3zM602 389h3v1h-3zM608 389h3v1h-3zM614 389h3v1h-3zM620 389h3v1h-3zM626 389h3v1h-3zM632 389h3v1h-3zM638 389h3v1h-3zM644 389h3v1h-3zM650 389h3v1h-3zM656 389h3v1h-3zM662 389h3v1h-3zM668 389h3v1h-3zM674 389h3v1h-3z" fill="#c0c0c0"/>
<path d="M14 406h3v1h-3zM20 406h3v1h-3zM26 406h3v1h-3zM32 406h3v1h-3zM38 406h3v1h-3zM44 406h3v1h-3zM50 406h3v1h-3zM56 406h3v1h-3zM62 406h3v1h-3zM68 406h3v1h-3zM74 406h3v1h-3zM80 406h3v1h-3zM86 406h3v1h-3zM92 406h3v1h-3zM98 406h3v1h-3zM104 406h3v1h-3zM110 406h3v1h-3zM116 406h3v1h-3zM122 406h3v1h-3zM128 406h3v1h-3zM134 406h3v1h-3zM140 406h3v1h-3zM146 406h3v1h-3zM152 406h3v1h-3zM158 406h3v1h-3zM164 406h3v1h-3zM170 406h3v1h-3zM176 406h3v1h-3zM182 406h3v1h-3zM188 406h3v1h-3zM194 406h3v1h-3zM200 406h3v1h-3zM206 406h3v1h-3zM212 406h3v1h-3zM218 406h3v1h-3zM224 406h3v1h-3zM230 406h3v1h-3zM236 406h3v1h-3zM242 406h3v1h-3zM248 406h3v1h-3zM254 406h3v1h-3zM260 406h3v1h-3zM266 406h3v1h-3zM272 406h3v1h-3zM278 406h3v1h-3zM284 406h3v1h-3zM290 406h3v1h-3zM296 406h3v1h-3zM302 406h3v1h-3zM308 406h3v1h-3zM314 406h3v1h-3zM320 406h3v1h-3zM326 406h3v1h-3zM332 406h3v1h-3zM338 406h3v1h-3zM344 406h3v1h-3zM350 406h3v1h-3zM356 406h3v1h-3zM362 406h3v1h-3zM368 406h3v1h-3zM374 406h3v1h-3zM380 406h3v1h-3zM386 406h3v1h-3zM392 406h3v1h-3zM398 406h3v1h-3zM404 406h3v1h-3zM410 406h3v1h-3zM416 406h3v1h-3zM422 406h3v1h-3zM428 406h3v1h-3zM434 406h3v1h-3zM440 406h3v1h-3zM446 406h3v1h-3zM452 406h3v1h-3zM458 406h3v1h-3zM464 406h3v1h-3zM470 406h3v1h-3zM476 406h3v1h-3zM482 406h3v1h-3zM488 406h3v1h-3zM494 406h3v1h-3zM500 406h3v1h-3zM506 406h3v1h-3zM512 406h3v1h-3zM518 406h3v1h-3zM524 406h3v1h-3zM530 406h3v1h-3zM536 406h3v1h-3zM542 406h3v1h-3zM548 406h3v1h-3zM554 406h3v1h-3zM560 406h3v1h-3zM566 406h3v1h-3zM572 406h3v1h-3zM578 406h3v1h-3zM584 406h3v1h-3zM590 406h3v1h-3zM596 406h3v1h-3zM602 406h3v1h-3zM608 406h3v1h-3zM614 406h3v1h-3zM620 406h3v1h-3zM626 406h3v1h-3zM632 406h3v1h-3zM638 406h3v1h-3zM644 406h3v1h-3zM650 406h3v1h-3zM656 406h3v1h-3zM662 406h3v1h-3zM668 406h3v1h-3zM674 406h3v1h-3z" fill="#c0c0c0"/>
<path d="M14 460h3v1h-3zM20 460h3v1h-3zM26 460h3v1h-3zM32 460h3v1h-3zM38 460h3v1h-3zM44 460h3v1h-3zM50 460h3v1h-3zM56 460h3v1h-3zM62 460h3v1h-3zM68 460h3v1h-3zM74 460h3v1h-3zM80 460h3v1h-3zM86 460h3v1h-3zM92 460h3v1h-3zM98 460h3v1h-3zM104 460h3v1h-3zM110 460h3v1h-3zM116 460h3v1h-3zM122 460h3v1h-3zM128 460h3v1h-3zM134 460h3v1h-3zM140 460h3v1h-3zM146 460h3v1h-3zM152 460h3v1h-3zM158 460h3v1h-3zM164 460h3v1h-3zM170 460h3v1h-3zM176 460h3v1h-3zM182 460h3v1h-3zM188 460h3v1h-3zM194 460h3v1h-3zM200 460h3v1h-3zM206 460h3v1h-3zM212 460h3v1h-3zM218 460h3v1h-3zM224 460h3v1h-3zM230 460h3v1h-3zM236 460h3v1h-3zM242 460h3v1h-3zM248 460h3v1h-3zM254 460h3v1h-3zM260 460h3v1h-3zM266 460h3v1h-3zM272 460h3v1h-3zM278 460h3v1h-3zM284 460h3v1h-3zM290 460h3v1h-3zM296 460h3v1h-3zM302 460h3v1h-3zM308 460h3v1h-3zM314 460h3v1h-3zM320 460h3v1h-3zM326 460h3v1h-3zM332 460h3v1h-3zM338 460h3v1h-3zM344 460h3v1h-3zM350 460h3v1h-3zM356 460h3v1h-3zM362 460h3v1h-3zM368 460h3v1h-3zM374 460h3v1h-3zM380 460h3v1h-3zM386 460h3v1h-3zM392 460h3v1h-3zM398 460h3v1h-3zM404 460h3v1h-3zM410 460h3v1h-3zM416 460h3v1h-3zM422 460h3v1h-3zM428 460h3v1h-3zM434 460h3v1h-3zM440 460h3v1h-3zM446 460h3v1h-3zM452 460h3v1h-3zM458 460h3v1h-3zM464 460h3v1h-3zM470 460h3v1h-3zM476 460h3v1h-3zM482 460h3v1h-3zM488 460h3v1h-3zM494 460h3v1h-3zM500 460h3v1h-3zM506 460h3v1h-3zM512 460h3v1h-3zM518 460h3v1h-3zM524 460h3v1h-3zM530 460h3v1h-3zM536 460h3v1h-3zM542 460h3v1h-3zM548 460h3v1h-3zM554 460h3v1h-3zM560 460h3v1h-3zM566 460h3v1h-3zM572 460h3v1h-3zM578 460h3v1h-3zM584 460h3v1h-3zM590 460h3v1h-3zM596 460h3v1h-3zM602 460h3v1h-3zM608 460h3v1h-3zM614 460h3v1h-3zM620 460h3v1h-3zM626 460h3v1h-3zM632 460h3v1h-3zM638 460h3v1h-3zM644 460h3v1h-3zM650 460h3v1h-3zM656 460h3v1h-3zM662 460h3v1h-3zM668 460h3v1h-3zM674 460h3v1h-3z" fill="#778899"/>
<path d="M69 35h1v2h-1zM69 40h1v3h-1zM69 46h1v3h-1zM69 52h1v3h-1zM69 58h1v3h-1zM69 64h1v3h-1zM69 70h1v3h-1zM69 76h1v3h-1zM69 82h1v3h-1zM69 88h1v3h-1zM69 94h1v3h-1zM69 100h1v3h-1zM69 106h1v3h-1zM69 112h1v3h-1zM69 118h1v3h-1zM69 124h1v3h-1zM69 130h1v3h-1zM69 136h1v3h-1zM69 142h1v3h-1zM69 148h1v3h-1zM69 154h1v3h-1zM69 160h1v3h-1zM69 166h1v3h-1zM69 172h1v3h-1zM69 178h1v3h-1zM69 184h1v3h-1zM69 190h1v3h-1zM69 196h1v3h-1zM69 202h1v3h-1zM69 208h1v3h-1zM69 214h1v3h-1zM69 220h1v3h-1zM69 226h1v3h-1zM69 232h1v3h-1zM69 238h1v3h-1zM69 244h1v3h-1zM69 250h1v3h-1zM69 256h1v3h-1zM69 262h1v3h-1zM69 268h1v3h-1zM69 274h1v3h-1zM69 280h1v3h-1zM69 286h1v2h-1z" fill="#ffffff"/>
<path d="M261 35h1v2h-1zM261 40h1v3h-1zM261 46h1v3h-1zM261 52h1v3h-1zM261 58h1v3h-1zM261 64h1v3h-1zM261 70h1v3h-1zM261 76h1v3h-1zM261 82h1v3h-1zM261 88h1v3h-1zM261 94h1v3h-1zM261 100h1v3h-1zM261 106h1v3h-1zM261 112h1v3h-1zM261 118h1v3h-1zM261 124h1v3h-1zM261 130h1v3h-1zM261 136h1v3h-1zM261 142h1v3h-1zM261 148h1v3h-1zM261 154h1v3h-1zM261 160h1v3h-1zM261 166h1v3h-1zM261 172h1v3h-1zM261 178h1v3h-1zM261 184h1v3h-1zM261 190h1v3h-1zM261 196h1v3h-1zM261 202h1v3h-1zM261 208h1v3h-1zM261 214h1v3h-1zM261 220h1v3h-1zM261 226h1v3h-1zM261 232h1v3h-1zM261 238h1v3h-1zM261 244h1v3h-1zM261 250h1v3h-1zM261 256h1v3h-1zM261 262h1v3h-1zM261 268h1v3h-1zM261 274h1v3h-1zM261 280h1v3h-1zM261 286h1v2h-1z" fill="#ffffff"/>
<path d="M453 35h1v2h-1zM453 40h1v3h-1zM453 46h1v3h-1zM453 52h1v3h-1zM453 58h1v3h-1zM453 64h1v3h-1zM453 70h1v3h-1zM453 76h1v3h-1zM453 82h1v3h-1zM453 88h1v3h-1zM453 94h1v3h-1zM453 100h1v3h-1zM453 106h1v3h-1zM453 112h1v3h-1zM453 118h1v3h-1zM453 124h1v3h-1zM453 130h1v3h-1zM453 136h1v3h-1zM453 142h1v3h-1zM453 148h1v3h-1zM453 154h1v3h-1zM453 160h1v3h-1zM453 166h1v3h-1zM453 172h1v3h-1zM453 178h1v3h-1zM453 184h1v3h-1zM453 190h1v3h-1zM453 196h1v3h-1zM453 202h1v3h-1zM453 208h1v3h-1zM453 214h1v3h-1zM453 220h1v3h-1zM453 226h1v3h-1zM453 232h1v3h-1zM453 238h1v3h-1zM453 244h1v3h-1zM453 250h1v3h-1zM453 256h1v3h-1zM453 262h1v3h-1zM453 268h1v3h-1zM453 274h1v3h-1zM453 280h1v3h-1zM453 286h1v2h-1z" fill="#ffffff"/>
<path d="M645 35h1v2h-1zM645 40h1v3h-1zM645 46h1v3h-1zM645 52h1v3h-1zM645 58h1v3h-1zM645 64h1v3h-1zM645 70h1v3h-1zM645 76h1v3h-1zM645 82h1v3h-1zM645 88h1v3h-1zM645 94h1v3h-1zM645 100h1v3h-1zM645 106h1v3h-1zM645 112h1v3h-1zM645 118h1v3h-1zM645 124h1v3h-1zM645 130h1v3h-1zM645 136h1v3h-1zM645 142h1v3h-1zM645 148h1v3h-1zM645 154h1v3h-1zM645 160h1v3h-1zM645 166h1v3h-1zM645 172h1v3h-1zM645 178h1v3h-1zM645 184h1v3h-1zM645 190h1v3h-1zM645 196h1v3h-1zM645 202h1v3h-1zM645 208h1v3h-1zM645 214h1v3h-1zM645 220h1v3h-1zM645 226h1v3h-1zM645 232h1v3h-1zM645 238h1v3h-1zM645 244h1v3h-1zM645 250h1v3h-1zM645 256h1v3h-1zM645 262h1v3h-1zM645 268h1v3h-1zM645 274h1v3h-1zM645 280h1v3h-1zM645 286h1v2h-1z" fill="#ffffff"/>
<path d="M69 292h1v3h-1zM69 298h1v3h-1zM69 304h1v3h-1zM69 310h1v3h-1zM69 316h1v3h-1zM69 322h1v3h-1zM69 328h1v3h-1zM69 334h1v3h-1zM69 340h1v3h-1zM69 346h1v3h-1zM69 352h1v3h-1zM69 358h1v3h-1zM69 364h1v3h-1zM69 370h1v3h-1zM69 376h1v3h-1zM69 382h1v3h-1zM69 388h1v3h-1zM69 394h1v3h-1zM69 400h1v3h-1zM69 406h1v3h-1zM69 412h1v3h-1z" fill="#ffffff"/>
<path d="M261 292h1v3h-1zM261 298h1v3h-1zM261 304h1v3h-1zM261 310h1v3h-1zM261 316h1v3h-1zM261 322h1v3h-1zM261 328h1v3h-1zM261 334h1v3h-1zM261 340h1v3h-1zM261 346h1v3h-1zM261 352h1v3h-1zM261 358h1v3h-1zM261 364h1v3h-1zM261 370h1v3h-1zM261 376h1v3h-1zM261 382h1v3h-1zM261 388h1v3h-1zM261 394h1v3h-1zM261 400h1v3h-1zM261 406h1v3h-1zM261 412h1v3h-1z" fill="#ffffff"/>
<path d="M453 292h1v3h-1zM453 298h1v3h-1zM453 304h1v3h-1zM453 310h1v3h-1zM453 316h1v3h-1zM453 322h1v3h-1zM453 328h1v3h-1zM453 334h1v3h-1zM453 340h1v3h-1zM453 346h1v3h-1zM453 352h1v3h-1zM453 358h1v3h-1zM453 364h1v3h-1zM453 370h1v3h-1zM453 376h1v3h-1zM453 382h1v3h-1zM453 388h1v3h-1zM453 394h1v3h-1zM453 400h1v3h-1zM453 406h1v3h-1zM453 412h1v3h-1z" fill="#ffffff"/>
<path d="M645 292h1v3h-1zM645 298h1v3h-1zM645 304h1v3h-1zM645 310h1v3h-1zM645 316h1v3h-1zM645 322h1v3h-1zM645 328h1v3h-1zM645 334h1v3h-1zM645 340h1v3h-1zM645 346h1v3h-1zM645 352h1v3h-1zM645 358h1v3h-1zM645 364h1v3h-1zM645 370h1v3h-1zM645 376h1v3h-1zM645 382h1v3h-1zM645 388h1v3h-1zM645 394h1v3h-1zM645 400h1v3h-1zM645 406h1v3h-1zM645 412h1v3h-1z" fill="#ffffff"/>
<path d="M69 424h1v3h-1zM69 430h1v3h-1zM69 436h1v3h-1zM69 442h1v3h-1zM69 448h1v3h-1zM69 454h1v3h-1zM69 460h1v3h-1zM69 466h1v3h-1zM69 472h1v3h-1zM69 478h1v3h-1zM69 484h1v3h-1zM69 490h1v3h-1zM69 496h1v3h-1zM69 502h1v3h-1zM69 508h1v3h-1zM69 514h1v3h-1zM69 520h1v3h-1zM69 526h1v3h-1zM69 532h1v3h-1zM69 538h1v3h-1zM69 544h1v3h-1zM69 550h1v2h-1z" fill="#ffffff"/>
<path d="M261 424h1v3h-1zM261 430h1v3h-1zM261 436h1v3h-1zM261 442h1v3h-1zM261 448h1v3h-1zM261 454h1v3h-1zM261 460h1v3h-1zM261 466h1v3h-1zM261 472h1v3h-1zM261 478h1v3h-1zM261 484h1v3h-1zM261 490h1v3h-1zM261 496h1v3h-1zM261 502h1v3h-1zM261 508h1v3h-1zM261 514h1v3h-1zM261 520h1v3h-1zM261 526h1v3h-1zM261 532h1v3h-1zM261 538h1v3h-1zM261 544h1v3h-1zM261 550h1v2h-1z" fill="#ffffff"/>
<path d="M453 424h1v3h-1zM453 430h1v3h-1zM453 436h1v3h-1zM453 442h1v3h-1zM453 448h1v3h-1zM453 454h1v3h-1zM453 460h1v3h-1zM453 466h1v3h-1zM453 472h1v3h-1zM453 478h1v3h-1zM453 484h1v3h-1zM453 490h1v3h-1zM453 496h1v3h-1zM453 502h1v3h-1zM453 508h1v3h-1zM453 514h1v3h-1zM453 520h1v3h-1zM453 526h1v3h-1zM453 532h1v3h-1zM453 538h1v3h-1zM453 544h1v3h-1zM453 550h1v2h-1z" fill="#ffffff"/>
<path d="M645 424h1v3h-1zM645 430h1v3h-1zM645 436h1v3h-1zM645 442h1v3h-1zM645 448h1v3h-1zM645 454h1v3h-1zM645 460h1v3h-1zM645 466h1v3h-1zM645 472h1v3h-1zM645 478h1v3h-1zM645 484h1v3h-1zM645 490h1v3h-1zM645 496h1v3h-1zM645 502h1v3h-1zM645 508h1v3h-1zM645 514h1v3h-1zM645 520h1v3h-1zM645 526h1v3h-1zM645 532h1v3h-1zM645 538h1v3h-1zM645 544h1v3h-1zM645 550h1v2h-1z" fill="#ffffff"/>
<g clip-path="url(#cm)">
<rect x="13" y="200" width="1" height="82" fill="#00ff00"/>
<rect x="11" y="211" width="5" height="15" fill="#00ff00"/>
<rect x="12" y="212" width="3" height="13" fill="#000000"/>
<rect x="21" y="177" width="1" height="73" fill="#00ff00"/>
<rect x="19" y="211" width="5" height="32" fill="#00ff00"/>
<rect x="20" y="212" width="3" height="30" fill="#ffffff"/>
<rect x="29" y="210" width="1" height="47" fill="#00ff00"/>
<rect x="27" y="216" width="5" height="27" fill="#00ff00"/>
<rect x="28" y="217" width="3" height="25" fill="#000000"/>
<rect x="37" y="209" width="1" height="40" fill="#00ff00"/>
<rect x="35" y="216" width="5" height="28" fill="#00ff00"/>
<rect x="36" y="217" width="3" height="26" fill="#ffffff"/>
<rect x="45" y="220" width="1" height="28" fill="#00ff00"/>
<rect x="43" y="232" width="5" height="12" fill="#00ff00"/>
<rect x="44" y="233" width="3" height="10" fill="#000000"/>
<rect x="53" y="219" width="1" height="17" fill="#00ff00"/>
<rect x="51" y="222" width="5" height="12" fill="#00ff00"/>
<rect x="52" y="223" width="3" height="10" fill="#000000"/>
<rect x="61" y="221" width="1" height="27" fill="#00ff00"/>
<rect x="59" y="222" width="5" height="25" fill="#00ff00"/>
<rect x="60" y="223" width="3" height="23" fill="#ffffff"/>
<rect x="69" y="242" width="1" height="9" fill="#00ff00"/>
<rect x="67" y="246" width="5" height="2" fill="#00ff00"/>
<rect x="77" y="240" width="1" height="23" fill="#00ff00"/>
<rect x="75" y="247" width="5" height="3" fill="#00ff00"/>
<rect x="76" y="248" width="3" height="1" fill="#ffffff"/>
<rect x="85" y="235" width="1" height="21" fill="#00ff00"/>
<rect x="83" y="236" width="5" height="15" fill="#00ff00"/>
<rect x="84" y="237" width="3" height="13" fill="#000000"/>
<rect x="93" y="206" width="1" height="33" fill="#00ff00"/>
<rect x="91" y="208" width="5" height="29" fill="#00ff00"/>
<rect x="92" y="209" width="3" height="27" fill="#000000"/>
<rect x="101" y="180" width="1" height="32" fill="#00ff00"/>
<rect x="99" y="204" width="5" height="5" fill="#00ff00"/>
<rect x="100" y="205" width="3" height="3" fill="#000000"/>
<rect x="109" y="193" width="1" height="39" fill="#00ff00"/>
<rect x="107" y="203" width="5" height="18" fill="#00ff00"/>
<rect x="108" y="204" width="3" height="16" fill="#ffffff"/>
<rect x="117" y="201" width="1" height="28" fill="#00ff00"/>
<rect x="115" y="214" width="5" height="7" fill="#00ff00"/>
<rect x="116" y="215" width="3" height="5" fill="#000000"/>
<rect x="125" y="198" width="1" height="26" fill="#00ff00"/>
<rect x="123" y="207" width="5" height="8" fill="#00ff00"/>
<rect x="124" y="208" width="3" height="6" fill="#000000"/>
<rect x="133" y="155" width="1" height="53" fill="#00ff00"/>
<rect x="131" y="165" width="5" height="43" fill="#00ff00"/>
<rect x="132" y="166" width="3" height="41" fill="#000000"/>
<rect x="141" y="140" width="1" height="40" fill="#00ff00"/>
<rect x="139" y="150" width="5" height="16" fill="#00ff00"/>
<rect x="140" y="151" width="3" height="14" fill="#000000"/>
<rect x="149" y="77" width="1" height="90" fill="#00ff00"/>
<rect x="147" y="112" width="5" height="40" fill="#00ff00"/>
<rect x="148" y="113" width="3" height="38" fill="#000000"/>
<rect x="157" y="48" width="1" height="73" fill="#00ff00"/>
<rect x="155" y="97" width="5" height="17" fill="#00ff00"/>
<rect x="156" y="98" width="3" height="15" fill="#000000"/>
<rect x="165" y="74" width="1" height="32" fill="#00ff00"/>
<rect x="163" y="78" width="5" height="20" fill="#00ff00"/>
<rect x="164" y="79" width="3" height="18" fill="#000000"/>
<rect x="173" y="78" width="1" height="37" fill="#00ff00"/>
<rect x="171" y="78" width="5" height="30" fill="#00ff00"/>
<rect x="172" y="79" width="3" height="28" fill="#ffffff"/>
<rect x="181" y="77" width="1" height="83" fill="#00ff00"/>
<rect x="179" y="107" width="5" height="43" fill="#00ff00"/>
<rect x="180" y="108" width="3" height="41" fill="#ffffff"/>
<rect x="189" y="143" width="1" height="79" fill="#00ff00"/>
<rect x="187" y="148" width="5" height="30" fill="#00ff00"/>
<rect x="188" y="149" width="3" height="28" fill="#ffffff"/>
<rect x="197" y="156" width="1" height="40" fill="#00ff00"/>
<rect x="195" y="172" width="5" height="6" fill="#00ff00"/>
<rect x="196" y="173" width="3" height="4" fill="#000000"/>
<rect x="205" y="118" width="1" height="87" fill="#00ff00"/>
<rect x="203" y="142" width="5" height="31" fill="#00ff00"/>
<rect x="204" y="143" width="3" height="29" fill="#000000"/>
<rect x="213" y="129" width="1" height="46" fill="#00ff00"/>
<rect x="211" y="144" width="5" height="14" fill="#00ff00"/>
<rect x="212" y="145" width="3" height="12" fill="#ffffff"/>
<rect x="221" y="138" width="1" height="37" fill="#00ff00"/>
<rect x="219" y="138" width="5" height="20" fill="#00ff00"/>
<rect x="220" y="139" width="3" height="18" fill="#000000"/>
<rect x="229" y="77" width="1" height="64" fill="#00ff00"/>
<rect x="227" y="89" width="5" height="50" fill="#00ff00"/>
<rect x="228" y="90" width="3" height="48" fill="#000000"/>
<rect x="237" y="85" width="1" height="24" fill="#00ff00"/>
<rect x="235" y="90" width="5" height="6" fill="#00ff00"/>
<rect x="236" y="91" width="3" height="4" fill="#ffffff"/>
<rect x="245" y="95" width="1" height="53" fill="#00ff00"/>
<rect x="243" y="95" width="5" height="47" fill="#00ff00"/>
<rect x="244" y="96" width="3" height="45" fill="#ffffff"/>
<rect x="253" y="133" width="1" height="23" fill="#00ff00"/>
<rect x="251" y="140" width="5" height="6" fill="#00ff00"/>
<rect x="252" y="141" width="3" height="4" fill="#ffffff"/>
<rect x="261" y="122" width="1" height="35" fill="#00ff00"/>
<rect x="259" y="122" width="5" height="28" fill="#00ff00"/>
<rect x="260" y="123" width="3" height="26" fill="#ffffff"/>
<rect x="269" y="134" width="1" height="32" fill="#00ff00"/>
<rect x="267" y="149" width="5" height="4" fill="#00ff00"/>
<rect x="268" y="150" width="3" height="2" fill="#ffffff"/>
<rect x="277" y="139" width="1" height="32" fill="#00ff00"/>
<rect x="275" y="153" width="5" height="16" fill="#00ff00"/>
<rect x="276" y="154" width="3" height="14" fill="#ffffff"/>
<rect x="285" y="131" width="1" height="57" fill="#00ff00"/>
<rect x="283" y="169" width="5" height="13" fill="#00ff00"/>
<rect x="284" y="170" width="3" height="11" fill="#ffffff"/>
<rect x="293" y="172" width="1" height="26" fill="#00ff00"/>
<rect x="291" y="181" width="5" height="11" fill="#00ff00"/>
<rect x="292" y="182" width="3" height="9" fill="#ffffff"/>
<rect x="301" y="184" width="1" height="22" fill="#00ff00"/>
<rect x="299" y="192" width="5" height="7" fill="#00ff00"/>
<rect x="300" y="193" width="3" height="5" fill="#ffffff"/>
<rect x="309" y="184" width="1" height="23" fill="#00ff00"/>
<rect x="307" y="192" width="5" height="7" fill="#00ff00"/>
<rect x="308" y="193" width="3" height="5" fill="#000000"/>
<rect x="317" y="191" width="1" height="17" fill="#00ff00"/>
<rect x="315" y="192" width="5" height="13" fill="#00ff00"/>
<rect x="316" y="193" width="3" height="11" fill="#ffffff"/>
<rect x="325" y="197" width="1" height="24" fill="#00ff00"/>
<rect x="323" y="204" width="5" height="12" fill="#00ff00"/>
<rect x="324" y="205" width="3" height="10" fill="#ffffff"/>
<rect x="333" y="135" width="1" height="88" fill="#00ff00"/>
<rect x="331" y="142" width="5" height="73" fill="#00ff00"/>
<rect x="332" y="143" width="3" height="71" fill="#000000"/>
<rect x="341" y="99" width="1" height="77" fill="#00ff00"/>
<rect x="339" y="142" width="5" height="34" fill="#00ff00"/>
<rect x="340" y="143" width="3" height="32" fill="#ffffff"/>
<rect x="349" y="166" width="1" height="24" fill="#00ff00"/>
<rect x="347" y="175" width="5" height="9" fill="#00ff00"/>
<rect x="348" y="176" width="3" height="7" fill="#ffffff"/>
<rect x="357" y="173" width="1" height="30" fill="#00ff00"/>
<rect x="355" y="182" width="5" height="5" fill="#00ff00"/>
<rect x="356" y="183" width="3" height="3" fill="#ffffff"/>
<rect x="365" y="181" width="1" height="21" fill="#00ff00"/>
<rect x="363" y="185" width="5" height="3" fill="#00ff00"/>
<rect x="364" y="186" width="3" height="1" fill="#ffffff"/>
<rect x="373" y="184" width="1" height="30" fill="#00ff00"/>
<rect x="371" y="187" width="5" height="21" fill="#00ff00"/>
<rect x="372" y="188" width="3" height="19" fill="#ffffff"/>
<rect x="381" y="174" width="1" height="52" fill="#00ff00"/>
<rect x="379" y="207" width="5" height="14" fill="#00ff00"/>
<rect x="380" y="208" width="3" height="12" fill="#ffffff"/>
<rect x="389" y="184" width="1" height="53" fill="#00ff00"/>
<rect x="387" y="194" width="5" height="26" fill="#00ff00"/>
<rect x="388" y="195" width="3" height="24" fill="#000000"/>
<rect x="397" y="154" width="1" height="58" fill="#00ff00"/>
<rect x="395" y="194" width="5" height="3" fill="#00ff00"/>
<rect x="396" y="195" width="3" height="1" fill="#ffffff"/>
<rect x="405" y="192" width="1" height="42" fill="#00ff00"/>
<rect x="403" y="195" width="5" height="3" fill="#00ff00"/>
<rect x="404" y="196" width="3" height="1" fill="#ffffff"/>
<rect x="413" y="187" width="1" height="52" fill="#00ff00"/>
<rect x="411" y="198" width="5" height="26" fill="#00ff00"/>
<rect x="412" y="199" width="3" height="24" fill="#ffffff"/>
<rect x="421" y="221" width="1" height="37" fill="#00ff00"/>
<rect x="419" y="223" width="5" height="34" fill="#00ff00"/>
<rect x="420" y="224" width="3" height="32" fill="#ffffff"/>
<rect x="429" y="243" width="1" height="22" fill="#00ff00"/>
<rect x="427" y="256" width="5" height="4" fill="#00ff00"/>
<rect x="428" y="257" width="3" height="2" fill="#ffffff"/>
<rect x="437" y="218" width="1" height="43" fill="#00ff00"/>
<rect x="435" y="233" width="5" height="27" fill="#00ff00"/>
<rect x="436" y="234" width="3" height="25" fill="#000000"/>
<rect x="445" y="225" width="1" height="16" fill="#00ff00"/>
<rect x="443" y="231" width="5" height="3" fill="#00ff00"/>
<rect x="444" y="232" width="3" height="1" fill="#000000"/>
<rect x="453" y="230" width="1" height="10" fill="#00ff00"/>
<rect x="451" y="231" width="5" height="5" fill="#00ff00"/>
<rect x="452" y="232" width="3" height="3" fill="#ffffff"/>
<rect x="461" y="214" width="1" height="22" fill="#00ff00"/>
<rect x="459" y="222" width="5" height="12" fill="#00ff00"/>
<rect x="460" y="223" width="3" height="10" fill="#000000"/>
<rect x="469" y="219" width="1" height="12" fill="#00ff00"/>
<rect x="467" y="220" width="5" height="3" fill="#00ff00"/>
<rect x="468" y="221" width="3" height="1" fill="#ffffff"/>
<rect x="477" y="188" width="1" height="37" fill="#00ff00"/>
<rect x="475" y="190" width="5" height="33" fill="#00ff00"/>
<rect x="476" y="191" width="3" height="31" fill="#000000"/>
<rect x="485" y="187" width="1" height="26" fill="#00ff00"/>
<rect x="483" y="190" width="5" height="7" fill="#00ff00"/>
<rect x="484" y="191" width="3" height="5" fill="#ffffff"/>
<rect x="493" y="188" width="1" height="35" fill="#00ff00"/>
<rect x="491" y="196" width="5" height="19" fill="#00ff00"/>
<rect x="492" y="197" width="3" height="17" fill="#ffffff"/>
<rect x="501" y="201" width="1" height="25" fill="#00ff00"/>
<rect x="499" y="203" width="5" height="11" fill="#00ff00"/>
<rect x="500" y="204" width="3" height="9" fill="#000000"/>
<rect x="509" y="191" width="1" height="49" fill="#00ff00"/>
<rect x="507" y="203" width="5" height="37" fill="#00ff00"/>
<rect x="508" y="204" width="3" height="35" fill="#ffffff"/>
<rect x="517" y="219" width="1" height="28" fill="#00ff00"/>
<rect x="515" y="226" width="5" height="14" fill="#00ff00"/>
<rect x="516" y="227" width="3" height="12" fill="#000000"/>
<rect x="525" y="215" width="1" height="37" fill="#00ff00"/>
<rect x="523" y="226" width="5" height="22" fill="#00ff00"/>
<rect x="524" y="227" width="3" height="20" fill="#ffffff"/>
<rect x="533" y="184" width="1" height="71" fill="#00ff00"/>
<rect x="531" y="203" width="5" height="45" fill="#00ff00"/>
<rect x="532" y="204" width="3" height="43" fill="#000000"/>
<rect x="541" y="189" width="1" height="54" fill="#00ff00"/>
<rect x="539" y="203" width="5" height="40" fill="#00ff00"/>
<rect x="540" y="204" width="3" height="38" fill="#ffffff"/>
<rect x="549" y="213" width="1" height="48" fill="#00ff00"/>
<rect x="547" y="214" width="5" height="29" fill="#00ff00"/>
<rect x="548" y="215" width="3" height="27" fill="#000000"/>
<rect x="557" y="194" width="1" height="46" fill="#00ff00"/>
<rect x="555" y="214" width="5" height="20" fill="#00ff00"/>
<rect x="556" y="215" width="3" height="18" fill="#ffffff"/>
<rect x="565" y="154" width="1" height="91" fill="#00ff00"/>
<rect x="563" y="163" width="5" height="71" fill="#00ff00"/>
<rect x="564" y="164" width="3" height="69" fill="#000000"/>
<rect x="573" y="80" width="1" height="86" fill="#00ff00"/>
<rect x="571" y="100" width="5" height="65" fill="#00ff00"/>
<rect x="572" y="101" width="3" height="63" fill="#000000"/>
<rect x="581" y="91" width="1" height="51" fill="#00ff00"/>
<rect x="579" y="101" width="5" height="27" fill="#00ff00"/>
<rect x="580" y="102" width="3" height="25" fill="#ffffff"/>
<rect x="589" y="107" width="1" height="62" fill="#00ff00"/>
<rect x="587" y="126" width="5" height="37" fill="#00ff00"/>
<rect x="588" y="127" width="3" height="35" fill="#ffffff"/>
<rect x="597" y="141" width="1" height="36" fill="#00ff00"/>
<rect x="595" y="161" width="5" height="15" fill="#00ff00"/>
<rect x="596" y="162" width="3" height="13" fill="#ffffff"/>
<rect x="605" y="175" width="1" height="44" fill="#00ff00"/>
<rect x="603" y="175" width="5" height="35" fill="#00ff00"/>
<rect x="604" y="176" width="3" height="33" fill="#ffffff"/>
<rect x="613" y="158" width="1" height="55" fill="#00ff00"/>
<rect x="611" y="181" width="5" height="29" fill="#00ff00"/>
<rect x="612" y="182" width="3" height="27" fill="#000000"/>
<rect x="621" y="178" width="1" height="39" fill="#00ff00"/>
<rect x="619" y="181" width="5" height="8" fill="#00ff00"/>
<rect x="620" y="182" width="3" height="6" fill="#ffffff"/>
<rect x="629" y="184" width="1" height="20" fill="#00ff00"/>
<rect x="627" y="188" width="5" height="2" fill="#00ff00"/>
<rect x="637" y="186" width="1" height="17" fill="#00ff00"/>
<rect x="635" y="190" width="5" height="13" fill="#00ff00"/>
<rect x="636" y="191" width="3" height="11" fill="#ffffff"/>
<rect x="645" y="196" width="1" height="9" fill="#00ff00"/>
<rect x="643" y="196" width="5" height="9" fill="#00ff00"/>
<rect x="644" y="197" width="3" height="7" fill="#000000"/>
<rect x="653" y="185" width="1" height="15" fill="#00ff00"/>
<rect x="651" y="193" width="5" height="6" fill="#00ff00"/>
<rect x="652" y="194" width="3" height="4" fill="#000000"/>
<rect x="661" y="187" width="1" height="16" fill="#00ff00"/>
<rect x="659" y="190" width="5" height="4" fill="#00ff00"/>
<rect x="660" y="191" width="3" height="2" fill="#000000"/>
<rect x="669" y="171" width="1" height="31" fill="#00ff00"/>
<rect x="667" y="190" width="5" height="2" fill="#00ff00"/>
<rect x="677" y="172" width="1" height="33" fill="#00ff00"/>
<rect x="675" y="181" width="5" height="11" fill="#00ff00"/>
<rect x="676" y="182" width="3" height="9" fill="#000000"/>
</g>
<path d="M92.6 248 L102.19999999999999 258 V261.6 L92.6 251.8 L83.0 261.6 V258 Z" fill="#87ceeb" shape-rendering="auto"/>
<rect x="91.1" y="251" width="3" height="19" fill="#87ceeb" shape-rendering="auto"/>
<polygon points="84.40,257.50 85.90,262.00 90.55,261.05 87.40,264.60 90.55,268.15 85.90,267.20 84.40,271.70 82.90,267.20 78.25,268.15 81.40,264.60 78.25,261.05 82.90,262.00" fill="#87ceeb" shape-rendering="auto"/>
<path d="M557 248 L566.6 258 V261.6 L557 251.8 L547.4 261.6 V258 Z" fill="#87ceeb" shape-rendering="auto"/>
<rect x="555.5" y="251" width="3" height="19" fill="#87ceeb" shape-rendering="auto"/>
<polygon points="548.40,262.20 549.90,266.70 554.55,265.75 551.40,269.30 554.55,272.85 549.90,271.90 548.40,276.40 546.90,271.90 542.25,272.85 545.40,269.30 542.25,265.75 546.90,266.70" fill="#87ceeb" shape-rendering="auto"/>
<g>
<polyline points="13.5,400.25 21.5,391.50 29.5,372.00 37.5,353.00 45.5,332.75 53.5,336.00 61.5,366.25 69.5,396.50 77.5,404.00 85.5,389.00 93.5,365.25 101.5,341.50 109.5,334.00 117.5,324.00 125.5,317.25 133.5,314.00 141.5,313.25 149.5,313.25 157.5,313.25 165.5,309.00 173.5,306.50 181.5,315.50 189.5,340.00 197.5,375.25 205.5,384.00 213.5,399.00 221.5,391.50 229.5,366.50 237.5,332.75 245.5,317.25 253.5,326.50 261.5,349.00 269.5,375.25 277.5,389.00 285.5,415.50 293.5,417.00 301.5,417.00 309.5,417.00 317.5,417.00 325.5,417.00 333.5,382.75 341.5,364.00 349.5,347.75 357.5,331.50 365.5,331.50 373.5,355.25 381.5,377.75 389.5,386.50 397.5,409.00 405.5,403.50 413.5,402.75 421.5,402.75 429.5,402.75 437.5,400.25 445.5,402.25 453.5,402.25 461.5,384.00 469.5,361.50 477.5,324.00 485.5,309.75 493.5,311.00 501.5,315.25 509.5,349.00 517.5,364.00 525.5,391.00 533.5,386.50 541.5,401.00 549.5,387.75 557.5,377.75 565.5,347.75 573.5,324.00 581.5,319.00 589.5,314.00 597.5,322.75 605.5,332.75 613.5,351.50 621.5,377.75 629.5,406.50 637.5,407.75 645.5,401.50 653.5,392.75 661.5,377.75 669.5,365.25 677.5,372.75" fill="none" stroke="#ff0000" stroke-width="2.4" stroke-linejoin="round" clip-path="url(#ci)"/>
<polyline points="13.5,401.50 21.5,402.75 29.5,407.75 37.5,409.75 45.5,409.75 53.5,407.25 61.5,406.00 69.5,404.00 77.5,403.25 85.5,401.50 93.5,396.00 101.5,389.00 109.5,384.00 117.5,377.75 125.5,369.00 133.5,362.75 141.5,352.75 149.5,345.25 157.5,335.25 165.5,326.00 173.5,320.50 181.5,313.20 189.5,312.50 197.5,316.00 205.5,315.75 213.5,315.25 221.5,314.00 229.5,313.25 237.5,312.75 245.5,314.50 253.5,316.50 261.5,318.25 269.5,322.75 277.5,329.00 285.5,336.50 293.5,344.00 301.5,354.00 309.5,364.00 317.5,375.25 325.5,386.00 333.5,390.25 341.5,395.25 349.5,399.00 357.5,399.00 365.5,398.50 373.5,397.75 381.5,398.50 389.5,399.50 397.5,402.00 405.5,403.25 413.5,404.75 421.5,405.75 429.5,405.75 437.5,405.75 445.5,405.75 453.5,405.75 461.5,405.75 469.5,404.75 477.5,397.75 485.5,392.00 493.5,389.00 501.5,386.50 509.5,388.50 517.5,389.00 525.5,392.75 533.5,392.00 541.5,391.50 549.5,385.25 557.5,383.25 565.5,370.25 573.5,359.00 581.5,351.00 589.5,344.00 597.5,336.50 605.5,332.00 613.5,324.75 621.5,323.50 629.5,324.00 637.5,327.25 645.5,329.50 653.5,330.25 661.5,332.00 669.5,334.00 677.5,336.00" fill="none" stroke="#00ffff" stroke-width="2.4" stroke-linejoin="round" clip-path="url(#ci)"/>
<polyline points="13.5,414.00 21.5,414.00 29.5,414.00 37.5,414.00 45.5,413.75 53.5,413.50 61.5,413.00 69.5,412.75 77.5,412.75 85.5,412.75 93.5,412.50 101.5,412.00 109.5,411.00 117.5,409.75 125.5,408.50 133.5,407.00 141.5,404.75 149.5,400.25 157.5,395.25 165.5,390.25 173.5,385.25 181.5,383.50 189.5,381.50 197.5,377.75 205.5,374.50 213.5,370.25 221.5,366.50 229.5,362.00 237.5,359.75 245.5,356.50 253.5,353.50 261.5,350.75 269.5,347.25 277.5,345.25 285.5,342.00 293.5,339.00 301.5,336.00 309.5,333.25 317.5,332.00 325.5,330.75 333.5,329.00 341.5,329.50 349.5,330.75 357.5,331.00 365.5,330.75 373.5,329.00 381.5,331.00 389.5,331.50 397.5,334.50 405.5,336.00 413.5,341.50 421.5,347.25 429.5,352.75 437.5,356.50 445.5,360.25 453.5,365.25 461.5,369.75 469.5,373.25 477.5,376.50 485.5,380.25 493.5,386.00 501.5,390.25 509.5,394.00 517.5,397.75 525.5,401.50 533.5,405.00 541.5,407.25 549.5,407.25 557.5,407.25 565.5,405.25 573.5,399.00 581.5,394.00 589.5,390.25 597.5,387.25 605.5,386.50 613.5,385.25 621.5,382.00 629.5,379.50 637.5,377.25 645.5,374.00 653.5,371.50 661.5,368.50 669.5,364.50 677.5,359.50" fill="none" stroke="#ffff00" stroke-width="2.4" stroke-linejoin="round" clip-path="url(#ci)"/>
</g>
<g clip-path="url(#cd)">
<rect x="12" y="460" width="3" height="87" fill="#c0c0c0"/>
<rect x="20" y="460" width="3" height="81" fill="#c0c0c0"/>
<rect x="28" y="460" width="3" height="75" fill="#c0c0c0"/>
<rect x="36" y="460" width="3" height="73" fill="#c0c0c0"/>
<rect x="44" y="460" width="3" height="69" fill="#c0c0c0"/>
<rect x="52" y="460" width="3" height="65" fill="#c0c0c0"/>
<rect x="60" y="460" width="3" height="63" fill="#c0c0c0"/>
<rect x="68" y="460" width="3" height="62" fill="#c0c0c0"/>
<rect x="76" y="460" width="3" height="60" fill="#c0c0c0"/>
<rect x="84" y="460" width="3" height="56" fill="#c0c0c0"/>
<rect x="92" y="460" width="3" height="49" fill="#c0c0c0"/>
<rect x="100" y="460" width="3" height="41" fill="#c0c0c0"/>
<rect x="108" y="460" width="3" height="39" fill="#c0c0c0"/>
<rect x="116" y="460" width="3" height="34" fill="#c0c0c0"/>
<rect x="124" y="460" width="3" height="29" fill="#c0c0c0"/>
<rect x="132" y="460" width="3" height="21" fill="#c0c0c0"/>
<rect x="140" y="460" width="3" height="11" fill="#c0c0c0"/>
<rect x="148" y="456" width="3" height="5" fill="#c0c0c0"/>
<rect x="156" y="444" width="3" height="17" fill="#c0c0c0"/>
<rect x="164" y="432" width="3" height="29" fill="#c0c0c0"/>
<rect x="172" y="427" width="3" height="34" fill="#c0c0c0"/>
<rect x="180" y="428" width="3" height="33" fill="#c0c0c0"/>
<rect x="188" y="435" width="3" height="26" fill="#c0c0c0"/>
<rect x="196" y="439" width="3" height="22" fill="#c0c0c0"/>
<rect x="204" y="440" width="3" height="21" fill="#c0c0c0"/>
<rect x="212" y="441" width="3" height="20" fill="#c0c0c0"/>
<rect x="220" y="440" width="3" height="21" fill="#c0c0c0"/>
<rect x="228" y="433" width="3" height="28" fill="#c0c0c0"/>
<rect x="236" y="428" width="3" height="33" fill="#c0c0c0"/>
<rect x="244" y="431" width="3" height="30" fill="#c0c0c0"/>
<rect x="252" y="436" width="3" height="25" fill="#c0c0c0"/>
<rect x="260" y="438" width="3" height="23" fill="#c0c0c0"/>
<rect x="268" y="441" width="3" height="20" fill="#c0c0c0"/>
<rect x="276" y="446" width="3" height="15" fill="#c0c0c0"/>
<rect x="284" y="452" width="3" height="9" fill="#c0c0c0"/>
<rect x="292" y="458" width="3" height="3" fill="#c0c0c0"/>
<rect x="300" y="460" width="3" height="5" fill="#c0c0c0"/>
<rect x="308" y="460" width="3" height="9" fill="#c0c0c0"/>
<rect x="316" y="460" width="3" height="13" fill="#c0c0c0"/>
<rect x="324" y="460" width="3" height="17" fill="#c0c0c0"/>
<rect x="332" y="460" width="3" height="12" fill="#c0c0c0"/>
<rect x="340" y="460" width="3" height="10" fill="#c0c0c0"/>
<rect x="348" y="460" width="3" height="11" fill="#c0c0c0"/>
<rect x="356" y="460" width="3" height="12" fill="#c0c0c0"/>
<rect x="364" y="460" width="3" height="12" fill="#c0c0c0"/>
<rect x="372" y="460" width="3" height="15" fill="#c0c0c0"/>
<rect x="380" y="460" width="3" height="20" fill="#c0c0c0"/>
<rect x="388" y="460" width="3" height="19" fill="#c0c0c0"/>
<rect x="396" y="460" width="3" height="19" fill="#c0c0c0"/>
<rect x="404" y="460" width="3" height="18" fill="#c0c0c0"/>
<rect x="412" y="460" width="3" height="21" fill="#c0c0c0"/>
<rect x="420" y="460" width="3" height="27" fill="#c0c0c0"/>
<rect x="428" y="460" width="3" height="33" fill="#c0c0c0"/>
<rect x="436" y="460" width="3" height="33" fill="#c0c0c0"/>
<rect x="444" y="460" width="3" height="32" fill="#c0c0c0"/>
<rect x="452" y="460" width="3" height="33" fill="#c0c0c0"/>
<rect x="460" y="460" width="3" height="31" fill="#c0c0c0"/>
<rect x="468" y="460" width="3" height="27" fill="#c0c0c0"/>
<rect x="476" y="460" width="3" height="22" fill="#c0c0c0"/>
<rect x="484" y="460" width="3" height="17" fill="#c0c0c0"/>
<rect x="492" y="460" width="3" height="17" fill="#c0c0c0"/>
<rect x="500" y="460" width="3" height="14" fill="#c0c0c0"/>
<rect x="508" y="460" width="3" height="17" fill="#c0c0c0"/>
<rect x="516" y="460" width="3" height="17" fill="#c0c0c0"/>
<rect x="524" y="460" width="3" height="20" fill="#c0c0c0"/>
<rect x="532" y="460" width="3" height="16" fill="#c0c0c0"/>
<rect x="540" y="460" width="3" height="17" fill="#c0c0c0"/>
<rect x="548" y="460" width="3" height="15" fill="#c0c0c0"/>
<rect x="556" y="460" width="3" height="15" fill="#c0c0c0"/>
<rect x="564" y="460" width="3" height="7" fill="#c0c0c0"/>
<rect x="572" y="450" width="3" height="11" fill="#c0c0c0"/>
<rect x="580" y="441" width="3" height="20" fill="#c0c0c0"/>
<rect x="588" y="439" width="3" height="22" fill="#c0c0c0"/>
<rect x="596" y="440" width="3" height="21" fill="#c0c0c0"/>
<rect x="604" y="445" width="3" height="16" fill="#c0c0c0"/>
<rect x="612" y="446" width="3" height="15" fill="#c0c0c0"/>
<rect x="620" y="447" width="3" height="14" fill="#c0c0c0"/>
<rect x="628" y="449" width="3" height="12" fill="#c0c0c0"/>
<rect x="636" y="452" width="3" height="9" fill="#c0c0c0"/>
<rect x="644" y="454" width="3" height="7" fill="#c0c0c0"/>
<rect x="652" y="454" width="3" height="7" fill="#c0c0c0"/>
<rect x="660" y="455" width="3" height="6" fill="#c0c0c0"/>
<rect x="668" y="454" width="3" height="7" fill="#c0c0c0"/>
<rect x="676" y="454" width="3" height="7" fill="#c0c0c0"/>
</g>
<polyline points="13.5,546.45 21.5,544.45 29.5,543.20 37.5,542.45 45.5,541.20 53.5,538.20 61.5,535.20 69.5,532.45 77.5,529.45 85.5,526.20 93.5,522.45 101.5,518.95 109.5,515.70 117.5,511.95 125.5,508.20 133.5,503.20 141.5,496.95 149.5,489.45 157.5,480.70 165.5,471.95 173.5,464.45 181.5,457.95 189.5,451.95 197.5,446.45 205.5,441.95 213.5,438.95 221.5,436.95 229.5,435.70 237.5,435.20 245.5,435.20 253.5,435.70 261.5,436.20 269.5,436.45 277.5,437.45 285.5,438.70 293.5,440.70 301.5,444.45 309.5,448.20 317.5,452.70 325.5,456.95 333.5,461.20 341.5,464.45 349.5,467.70 357.5,470.70 365.5,471.45 373.5,472.70 381.5,473.20 389.5,473.95 397.5,474.45 405.5,475.20 413.5,476.20 421.5,478.20 429.5,480.20 437.5,482.45 445.5,484.45 453.5,485.70 461.5,486.95 469.5,488.20 477.5,488.20 485.5,487.70 493.5,486.45 501.5,484.95 509.5,483.20 517.5,481.45 525.5,479.95 533.5,477.70 541.5,476.95 549.5,475.70 557.5,475.20 565.5,474.45 573.5,471.95 581.5,468.20 589.5,463.95 597.5,460.20 605.5,456.95 613.5,453.70 621.5,450.00 629.5,447.50 637.5,446.20 645.5,446.30 653.5,447.70 661.5,449.70 669.5,451.50 677.5,452.20" fill="none" stroke="#ff0000" stroke-width="2.4" stroke-linejoin="round" clip-path="url(#cd)"/>
<path d="M13 546 L18.5 552 H13 Z" fill="#778899" shape-rendering="auto"/>
<rect x="12" y="34" width="668" height="1" fill="#fff"/>
<rect x="12" y="288" width="668" height="1" fill="#fff"/>
<rect x="12" y="34" width="1" height="255" fill="#fff"/>
<rect x="679" y="34" width="1" height="255" fill="#fff"/>
<rect x="12" y="290" width="668" height="1" fill="#fff"/>
<rect x="12" y="418" width="668" height="1" fill="#fff"/>
<rect x="12" y="290" width="1" height="129" fill="#fff"/>
<rect x="679" y="290" width="1" height="129" fill="#fff"/>
<rect x="12" y="420" width="668" height="1" fill="#fff"/>
<rect x="12" y="552" width="668" height="1" fill="#fff"/>
<rect x="12" y="420" width="1" height="133" fill="#fff"/>
<rect x="679" y="420" width="1" height="133" fill="#fff"/>
<rect x="680" y="53" width="2" height="1" fill="#fff"/>
<rect x="680" y="86" width="2" height="1" fill="#fff"/>
<rect x="680" y="119" width="2" height="1" fill="#fff"/>
<rect x="680" y="153" width="2" height="1" fill="#fff"/>
<rect x="680" y="186" width="2" height="1" fill="#fff"/>
<rect x="680" y="219" width="2" height="1" fill="#fff"/>
<rect x="680" y="252" width="2" height="1" fill="#fff"/>
<rect x="680" y="285" width="2" height="1" fill="#fff"/>
<rect x="680" y="292" width="1" height="1" fill="#fff"/>
<rect x="680" y="360" width="1" height="1" fill="#fff"/>
<rect x="680" y="417" width="1" height="1" fill="#fff"/>
<rect x="680" y="422" width="1" height="1" fill="#fff"/>
<rect x="680" y="460" width="1" height="1" fill="#fff"/>
<rect x="680" y="546" width="1" height="1" fill="#fff"/>
<rect x="13" y="553" width="1" height="3" fill="#fff"/>
<rect x="77" y="553" width="1" height="3" fill="#fff"/>
<rect x="141" y="553" width="1" height="3" fill="#fff"/>
<rect x="205" y="553" width="1" height="3" fill="#fff"/>
<rect x="269" y="553" width="1" height="3" fill="#fff"/>
<rect x="333" y="553" width="1" height="3" fill="#fff"/>
<rect x="397" y="553" width="1" height="3" fill="#fff"/>
<rect x="461" y="553" width="1" height="3" fill="#fff"/>
<rect x="525" y="553" width="1" height="3" fill="#fff"/>
<rect x="589" y="553" width="1" height="3" fill="#fff"/>
<rect x="653" y="553" width="1" height="3" fill="#fff"/>
<path d="M16 41 h7 l-3.5 4 z" fill="#fff" shape-rendering="auto"/>
<text x="28.2" y="46" font-size="9" font-family="DejaVu Sans, Liberation Sans, sans-serif" stroke="#fff" stroke-width="0.18" fill="#fff" textLength="54" lengthAdjust="spacingAndGlyphs">EURUSD,H1</text>
<text x="88.5" y="46" font-size="9" font-family="DejaVu Sans, Liberation Sans, sans-serif" stroke="#fff" stroke-width="0.18" fill="#fff" textLength="32.8" lengthAdjust="spacingAndGlyphs">1.06852</text>
<text x="124.7" y="46" font-size="9" font-family="DejaVu Sans, Liberation Sans, sans-serif" stroke="#fff" stroke-width="0.18" fill="#fff" textLength="32.8" lengthAdjust="spacingAndGlyphs">1.06858</text>
<text x="160.2" y="46" font-size="9" font-family="DejaVu Sans, Liberation Sans, sans-serif" stroke="#fff" stroke-width="0.18" fill="#fff" textLength="32.8" lengthAdjust="spacingAndGlyphs">1.06785</text>
<text x="196" y="46" font-size="9" font-family="DejaVu Sans, Liberation Sans, sans-serif" stroke="#fff" stroke-width="0.18" fill="#fff" textLength="32.8" lengthAdjust="spacingAndGlyphs">1.06828</text>
<text x="685.3" y="57" font-size="9" font-family="DejaVu Sans, Liberation Sans, sans-serif" stroke="#fff" stroke-width="0.18" fill="#fff" textLength="33" lengthAdjust="spacingAndGlyphs">1.05895</text>
<text x="685.3" y="90" font-size="9" font-family="DejaVu Sans, Liberation Sans, sans-serif" stroke="#fff" stroke-width="0.18" fill="#fff" textLength="33" lengthAdjust="spacingAndGlyphs">1.05740</text>
<text x="685.3" y="123" font-size="9" font-family="DejaVu Sans, Liberation Sans, sans-serif" stroke="#fff" stroke-width="0.18" fill="#fff" textLength="33" lengthAdjust="spacingAndGlyphs">1.05580</text>
<text x="685.3" y="157" font-size="9" font-family="DejaVu Sans, Liberation Sans, sans-serif" stroke="#fff" stroke-width="0.18" fill="#fff" textLength="33" lengthAdjust="spacingAndGlyphs">1.05420</text>
<text x="685.3" y="190" font-size="9" font-family="DejaVu Sans, Liberation Sans, sans-serif" stroke="#fff" stroke-width="0.18" fill="#fff" textLength="33" lengthAdjust="spacingAndGlyphs">1.05265</text>
<text x="685.3" y="223" font-size="9" font-family="DejaVu Sans, Liberation Sans, sans-serif" stroke="#fff" stroke-width="0.18" fill="#fff" textLength="33" lengthAdjust="spacingAndGlyphs">1.05105</text>
<text x="685.3" y="256" font-size="9" font-family="DejaVu Sans, Liberation Sans, sans-serif" stroke="#fff" stroke-width="0.18" fill="#fff" textLength="33" lengthAdjust="spacingAndGlyphs">1.04950</text>
<text x="685.3" y="289" font-size="9" font-family="DejaVu Sans, Liberation Sans, sans-serif" stroke="#fff" stroke-width="0.18" fill="#fff" textLength="33" lengthAdjust="spacingAndGlyphs">1.04790</text>
<text x="14" y="303" font-size="9" font-family="DejaVu Sans, Liberation Sans, sans-serif" stroke="#fff" stroke-width="0.18" fill="#fff" textLength="3" lengthAdjust="spacingAndGlyphs">_</text>
<text x="17" y="303" font-size="9" font-family="DejaVu Sans, Liberation Sans, sans-serif" stroke="#fff" stroke-width="0.18" fill="#fff" textLength="110" lengthAdjust="spacingAndGlyphs">R(9,26,52) -50.0 52.3 11.4</text>
<text x="682.5" y="301" font-size="9" font-family="DejaVu Sans, Liberation Sans, sans-serif" stroke="#fff" stroke-width="0.18" fill="#fff" textLength="15.8" lengthAdjust="spacingAndGlyphs">120</text>
<text x="682.5" y="307" font-size="9" font-family="DejaVu Sans, Liberation Sans, sans-serif" stroke="#fff" stroke-width="0.18" fill="#fff" textLength="14.5" lengthAdjust="spacingAndGlyphs">100</text>
<text x="682.5" y="318" font-size="9" font-family="DejaVu Sans, Liberation Sans, sans-serif" stroke="#fff" stroke-width="0.18" fill="#fff" textLength="10" lengthAdjust="spacingAndGlyphs">80</text>
<text x="682.5" y="336" font-size="9" font-family="DejaVu Sans, Liberation Sans, sans-serif" stroke="#fff" stroke-width="0.18" fill="#fff" textLength="10" lengthAdjust="spacingAndGlyphs">50</text>
<text x="682.5" y="364" font-size="9" font-family="DejaVu Sans, Liberation Sans, sans-serif" stroke="#fff" stroke-width="0.18" fill="#fff" textLength="18" lengthAdjust="spacingAndGlyphs">0.00</text>
<text x="682.5" y="393" font-size="9" font-family="DejaVu Sans, Liberation Sans, sans-serif" stroke="#fff" stroke-width="0.18" fill="#fff" textLength="13.2" lengthAdjust="spacingAndGlyphs">-50</text>
<text x="682.5" y="410" font-size="9" font-family="DejaVu Sans, Liberation Sans, sans-serif" stroke="#fff" stroke-width="0.18" fill="#fff" textLength="13.2" lengthAdjust="spacingAndGlyphs">-80</text>
<text x="682.5" y="415" font-size="9" font-family="DejaVu Sans, Liberation Sans, sans-serif" stroke="#fff" stroke-width="0.18" fill="#fff" textLength="18" lengthAdjust="spacingAndGlyphs">-100</text>
<text x="17" y="433" font-size="9" font-family="DejaVu Sans, Liberation Sans, sans-serif" stroke="#fff" stroke-width="0.18" fill="#fff" textLength="148.8" lengthAdjust="spacingAndGlyphs">MACD(12,26,9) 0.000500 0.000637</text>
<text x="682.8" y="431" font-size="9" font-family="DejaVu Sans, Liberation Sans, sans-serif" stroke="#fff" stroke-width="0.18" fill="#fff" textLength="33.5" lengthAdjust="spacingAndGlyphs">0.00109</text>
<text x="682.8" y="464" font-size="9" font-family="DejaVu Sans, Liberation Sans, sans-serif" stroke="#fff" stroke-width="0.18" fill="#fff" textLength="18" lengthAdjust="spacingAndGlyphs">0.00</text>
<text x="683.3" y="549" font-size="9" font-family="DejaVu Sans, Liberation Sans, sans-serif" stroke="#fff" stroke-width="0.18" fill="#fff" textLength="41" lengthAdjust="spacingAndGlyphs">-0.002578</text>
<text x="12.5" y="565" font-size="9" font-family="DejaVu Sans, Liberation Sans, sans-serif" stroke="#fff" stroke-width="0.18" fill="#fff" textLength="50.8" lengthAdjust="spacingAndGlyphs">28 Apr 2022</text>
<text x="76.5" y="565" font-size="9" font-family="DejaVu Sans, Liberation Sans, sans-serif" stroke="#fff" stroke-width="0.18" fill="#fff" textLength="53.2" lengthAdjust="spacingAndGlyphs">29 Apr 01:00</text>
<text x="140.5" y="565" font-size="9" font-family="DejaVu Sans, Liberation Sans, sans-serif" stroke="#fff" stroke-width="0.18" fill="#fff" textLength="53.2" lengthAdjust="spacingAndGlyphs">29 Apr 09:00</text>
<text x="204.5" y="565" font-size="9" font-family="DejaVu Sans, Liberation Sans, sans-serif" stroke="#fff" stroke-width="0.18" fill="#fff" textLength="53.2" lengthAdjust="spacingAndGlyphs">29 Apr 17:00</text>
<text x="268.5" y="565" font-size="9" font-family="DejaVu Sans, Liberation Sans, sans-serif" stroke="#fff" stroke-width="0.18" fill="#fff" textLength="53" lengthAdjust="spacingAndGlyphs">2 May 01:00</text>
<text x="332.5" y="565" font-size="9" font-family="DejaVu Sans, Liberation Sans, sans-serif" stroke="#fff" stroke-width="0.18" fill="#fff" textLength="53" lengthAdjust="spacingAndGlyphs">2 May 09:00</text>
<text x="396.5" y="565" font-size="9" font-family="DejaVu Sans, Liberation Sans, sans-serif" stroke="#fff" stroke-width="0.18" fill="#fff" textLength="53" lengthAdjust="spacingAndGlyphs">2 May 17:00</text>
<text x="460.5" y="565" font-size="9" font-family="DejaVu Sans, Liberation Sans, sans-serif" stroke="#fff" stroke-width="0.18" fill="#fff" textLength="53" lengthAdjust="spacingAndGlyphs">3 May 01:00</text>
<text x="524.5" y="565" font-size="9" font-family="DejaVu Sans, Liberation Sans, sans-serif" stroke="#fff" stroke-width="0.18" fill="#fff" textLength="53" lengthAdjust="spacingAndGlyphs">3 May 09:00</text>
<text x="588.5" y="565" font-size="9" font-family="DejaVu Sans, Liberation Sans, sans-serif" stroke="#fff" stroke-width="0.18" fill="#fff" textLength="53" lengthAdjust="spacingAndGlyphs">3 May 17:00</text>
<text x="652.5" y="565" font-size="9" font-family="DejaVu Sans, Liberation Sans, sans-serif" stroke="#fff" stroke-width="0.18" fill="#fff" textLength="53" lengthAdjust="spacingAndGlyphs">4 May 01:00</text>
</svg>
</body></html>
